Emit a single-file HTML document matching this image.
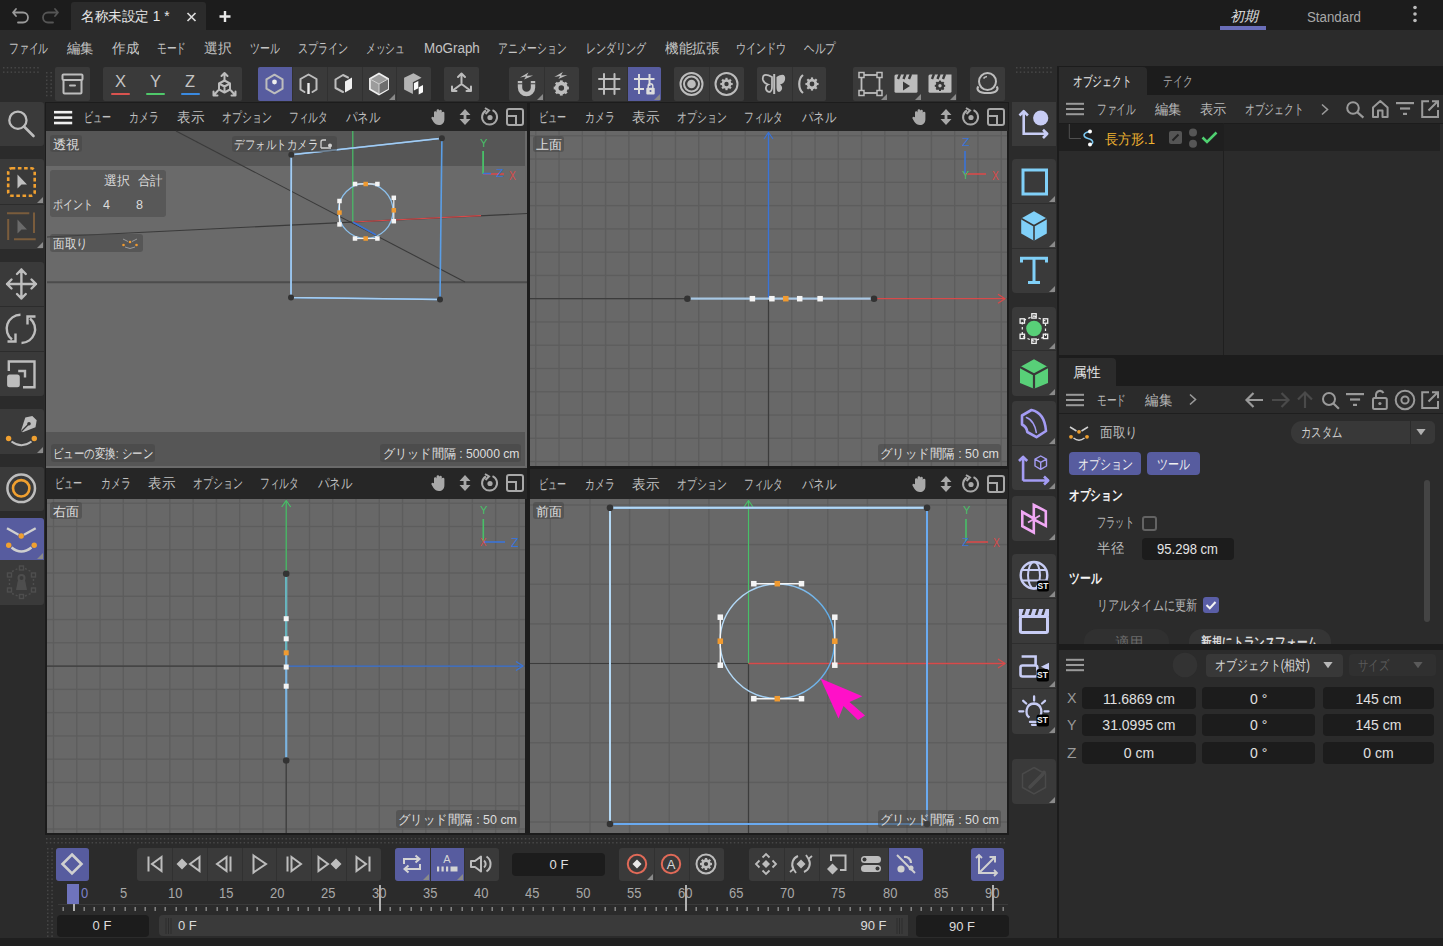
<!DOCTYPE html><html><head><meta charset="utf-8"><style>
*{box-sizing:border-box}
html,body{margin:0;padding:0}
body{width:1443px;height:946px;overflow:hidden;position:relative;background:#2b2b2b;font-family:"Liberation Sans",sans-serif;}
.t{position:absolute;white-space:nowrap;transform-origin:0 50%;}
.a{position:absolute}
svg.a{overflow:visible}
</style></head><body><div class="a" style="left:0px;top:0px;width:1443px;height:30px;background:#1c1c1c;"></div><div class="a" style="left:71px;top:2px;width:135px;height:28px;background:#2b2b2b;border-radius:3px 3px 0 0"></div><div class="a" style="left:0px;top:30px;width:1443px;height:36px;background:#2b2b2b;"></div><div class="a" style="left:45px;top:102px;width:964px;height:733px;background:#1c1c1c;"></div><div class="a" style="left:1057px;top:66px;width:2px;height:872px;background:#1c1c1c;"></div><div class="a" style="left:0px;top:938px;width:1443px;height:8px;background:#1f1f1f;"></div><div class="t" style="left:81.00px;top:7.00px;font-size:14px;line-height:18px;color:#e8e8e8;font-weight:400;font-family:'Liberation Sans',sans-serif;transform:scaleX(0.9724);">名称未設定 1 *</div><svg class="a" style="left:10px;top:4px;" width="22" height="20" viewBox="0 0 22 20"><path d="M5 6 L2 9.5 L5 13 M2.5 9.5 H12 A5 5 0 0 1 12 19.5 H7" fill="none" stroke="#9a9a9a" stroke-width="1.8" stroke-linecap="round" stroke-linejoin="round" transform="translate(1,-1)"/></svg><svg class="a" style="left:40px;top:4px;" width="22" height="20" viewBox="0 0 22 20"><path d="M15 6 L18 9.5 L15 13 M17.5 9.5 H8 A5 5 0 0 0 8 19.5 H13" fill="none" stroke="#555" stroke-width="1.8" stroke-linecap="round" stroke-linejoin="round" transform="translate(0,-1)"/></svg><svg class="a" style="left:186px;top:12px;" width="11" height="10" viewBox="0 0 11 10"><path d="M1.5 1 L9.5 9 M9.5 1 L1.5 9" stroke="#dcdcdc" stroke-width="1.7"/></svg><svg class="a" style="left:218px;top:10px;" width="14" height="13" viewBox="0 0 14 13"><path d="M7 1 V12 M1.5 6.5 H12.5" stroke="#e8e8e8" stroke-width="2.4"/></svg><div class="t" style="left:1230.00px;top:7.00px;font-size:14px;line-height:18px;color:#e0e0e0;font-weight:400;font-family:'Liberation Sans',sans-serif;font-style:italic;">初期</div><div class="a" style="left:1220px;top:26.2px;width:46px;height:3.8px;background:#6a6eb8;"></div><div class="t" style="left:1307.00px;top:7.50px;font-size:14px;line-height:18px;color:#a8a8a8;font-weight:400;font-family:'Liberation Sans',sans-serif;transform:scaleX(0.9502);">Standard</div><svg class="a" style="left:1411px;top:4px;" width="8" height="20" viewBox="0 0 8 20"><circle cx="4" cy="3.5" r="1.8" fill="#bbb"/><circle cx="4" cy="10" r="1.8" fill="#bbb"/><circle cx="4" cy="16.5" r="1.8" fill="#bbb"/></svg><div class="t" style="left:8.70px;top:38.70px;font-size:14px;line-height:18px;color:#c4c4c4;font-weight:400;font-family:'Liberation Sans',sans-serif;transform:scaleX(0.7018);">ファイル</div><div class="t" style="left:67.00px;top:38.70px;font-size:14px;line-height:18px;color:#c4c4c4;font-weight:400;font-family:'Liberation Sans',sans-serif;transform:scaleX(0.9536);">編集</div><div class="t" style="left:112.00px;top:38.70px;font-size:14px;line-height:18px;color:#c4c4c4;font-weight:400;font-family:'Liberation Sans',sans-serif;transform:scaleX(0.9643);">作成</div><div class="t" style="left:156.60px;top:38.70px;font-size:14px;line-height:18px;color:#c4c4c4;font-weight:400;font-family:'Liberation Sans',sans-serif;transform:scaleX(0.6929);">モード</div><div class="t" style="left:203.70px;top:38.70px;font-size:14px;line-height:18px;color:#c4c4c4;font-weight:400;font-family:'Liberation Sans',sans-serif;transform:scaleX(0.9893);">選択</div><div class="t" style="left:249.70px;top:38.70px;font-size:14px;line-height:18px;color:#c4c4c4;font-weight:400;font-family:'Liberation Sans',sans-serif;transform:scaleX(0.7071);">ツール</div><div class="t" style="left:297.50px;top:38.70px;font-size:14px;line-height:18px;color:#c4c4c4;font-weight:400;font-family:'Liberation Sans',sans-serif;transform:scaleX(0.7186);">スプライン</div><div class="t" style="left:366.00px;top:38.70px;font-size:14px;line-height:18px;color:#c4c4c4;font-weight:400;font-family:'Liberation Sans',sans-serif;transform:scaleX(0.6964);">メッシュ</div><div class="t" style="left:423.90px;top:38.70px;font-size:14px;line-height:18px;color:#c4c4c4;font-weight:400;font-family:'Liberation Sans',sans-serif;transform:scaleX(0.9561);">MoGraph</div><div class="t" style="left:498.00px;top:38.70px;font-size:14px;line-height:18px;color:#c4c4c4;font-weight:400;font-family:'Liberation Sans',sans-serif;transform:scaleX(0.6980);">アニメーション</div><div class="t" style="left:585.50px;top:38.70px;font-size:14px;line-height:18px;color:#c4c4c4;font-weight:400;font-family:'Liberation Sans',sans-serif;transform:scaleX(0.7202);">レンダリング</div><div class="t" style="left:664.60px;top:38.70px;font-size:14px;line-height:18px;color:#c4c4c4;font-weight:400;font-family:'Liberation Sans',sans-serif;transform:scaleX(0.9679);">機能拡張</div><div class="t" style="left:736.30px;top:38.70px;font-size:14px;line-height:18px;color:#c4c4c4;font-weight:400;font-family:'Liberation Sans',sans-serif;transform:scaleX(0.7157);">ウインドウ</div><div class="t" style="left:804.20px;top:38.70px;font-size:14px;line-height:18px;color:#c4c4c4;font-weight:400;font-family:'Liberation Sans',sans-serif;transform:scaleX(0.7571);">ヘルプ</div><svg class="a" style="left:0px;top:67px;" width="44" height="8" viewBox="0 0 44 8"><rect x="3.0" y="0" width="1.5" height="1.5" fill="#474747"/><rect x="3.0" y="4.4" width="1.5" height="1.5" fill="#474747"/><rect x="6.8" y="0" width="1.5" height="1.5" fill="#474747"/><rect x="6.8" y="4.4" width="1.5" height="1.5" fill="#474747"/><rect x="10.6" y="0" width="1.5" height="1.5" fill="#474747"/><rect x="10.6" y="4.4" width="1.5" height="1.5" fill="#474747"/><rect x="14.4" y="0" width="1.5" height="1.5" fill="#474747"/><rect x="14.4" y="4.4" width="1.5" height="1.5" fill="#474747"/><rect x="18.2" y="0" width="1.5" height="1.5" fill="#474747"/><rect x="18.2" y="4.4" width="1.5" height="1.5" fill="#474747"/><rect x="22.0" y="0" width="1.5" height="1.5" fill="#474747"/><rect x="22.0" y="4.4" width="1.5" height="1.5" fill="#474747"/><rect x="25.8" y="0" width="1.5" height="1.5" fill="#474747"/><rect x="25.8" y="4.4" width="1.5" height="1.5" fill="#474747"/><rect x="29.6" y="0" width="1.5" height="1.5" fill="#474747"/><rect x="29.6" y="4.4" width="1.5" height="1.5" fill="#474747"/><rect x="33.4" y="0" width="1.5" height="1.5" fill="#474747"/><rect x="33.4" y="4.4" width="1.5" height="1.5" fill="#474747"/><rect x="37.2" y="0" width="1.5" height="1.5" fill="#474747"/><rect x="37.2" y="4.4" width="1.5" height="1.5" fill="#474747"/></svg><svg class="a" style="left:46px;top:72px;" width="8" height="28" viewBox="0 0 8 28"><rect x="0" y="0.0" width="1.5" height="1.5" fill="#474747"/><rect x="4.4" y="0.0" width="1.5" height="1.5" fill="#474747"/><rect x="0" y="3.8" width="1.5" height="1.5" fill="#474747"/><rect x="4.4" y="3.8" width="1.5" height="1.5" fill="#474747"/><rect x="0" y="7.6" width="1.5" height="1.5" fill="#474747"/><rect x="4.4" y="7.6" width="1.5" height="1.5" fill="#474747"/><rect x="0" y="11.4" width="1.5" height="1.5" fill="#474747"/><rect x="4.4" y="11.4" width="1.5" height="1.5" fill="#474747"/><rect x="0" y="15.2" width="1.5" height="1.5" fill="#474747"/><rect x="4.4" y="15.2" width="1.5" height="1.5" fill="#474747"/><rect x="0" y="19.0" width="1.5" height="1.5" fill="#474747"/><rect x="4.4" y="19.0" width="1.5" height="1.5" fill="#474747"/><rect x="0" y="22.8" width="1.5" height="1.5" fill="#474747"/><rect x="4.4" y="22.8" width="1.5" height="1.5" fill="#474747"/></svg><svg class="a" style="left:1016px;top:67px;" width="40" height="8" viewBox="0 0 40 8"><rect x="0.0" y="0" width="1.5" height="1.5" fill="#474747"/><rect x="0.0" y="4.4" width="1.5" height="1.5" fill="#474747"/><rect x="3.8" y="0" width="1.5" height="1.5" fill="#474747"/><rect x="3.8" y="4.4" width="1.5" height="1.5" fill="#474747"/><rect x="7.6" y="0" width="1.5" height="1.5" fill="#474747"/><rect x="7.6" y="4.4" width="1.5" height="1.5" fill="#474747"/><rect x="11.4" y="0" width="1.5" height="1.5" fill="#474747"/><rect x="11.4" y="4.4" width="1.5" height="1.5" fill="#474747"/><rect x="15.2" y="0" width="1.5" height="1.5" fill="#474747"/><rect x="15.2" y="4.4" width="1.5" height="1.5" fill="#474747"/><rect x="19.0" y="0" width="1.5" height="1.5" fill="#474747"/><rect x="19.0" y="4.4" width="1.5" height="1.5" fill="#474747"/><rect x="22.8" y="0" width="1.5" height="1.5" fill="#474747"/><rect x="22.8" y="4.4" width="1.5" height="1.5" fill="#474747"/><rect x="26.6" y="0" width="1.5" height="1.5" fill="#474747"/><rect x="26.6" y="4.4" width="1.5" height="1.5" fill="#474747"/><rect x="30.4" y="0" width="1.5" height="1.5" fill="#474747"/><rect x="30.4" y="4.4" width="1.5" height="1.5" fill="#474747"/><rect x="34.2" y="0" width="1.5" height="1.5" fill="#474747"/><rect x="34.2" y="4.4" width="1.5" height="1.5" fill="#474747"/></svg><div class="a" style="left:55px;top:67px;width:35px;height:34px;background:#3a3a3a;border-radius:2px"></div><div class="a" style="left:103px;top:67px;width:139px;height:34px;background:#3a3a3a;border-radius:2px"></div><div class="a" style="left:257.5px;top:67px;width:173.5px;height:34px;background:#3a3a3a;border-radius:2px"></div><div class="a" style="left:257.5px;top:67px;width:34.7px;height:34px;background:#575c9f;border-top-left-radius:2px;border-bottom-left-radius:2px;"></div><div class="a" style="left:292.2px;top:67px;width:1px;height:34px;background:#313131;"></div><div class="a" style="left:326.9px;top:67px;width:1px;height:34px;background:#313131;"></div><div class="a" style="left:361.6px;top:67px;width:1px;height:34px;background:#313131;"></div><svg class="a" style="left:389.3px;top:94px;" width="6" height="6" viewBox="0 0 6 6"><path d="M6 0 V6 H0 Z" fill="#8a8a8a"/></svg><div class="a" style="left:396.3px;top:67px;width:1px;height:34px;background:#313131;"></div><div class="a" style="left:444px;top:67px;width:35px;height:34px;background:#3a3a3a;border-radius:2px"></div><div class="a" style="left:509px;top:67px;width:70px;height:34px;background:#3a3a3a;border-radius:2px"></div><svg class="a" style="left:537.0px;top:94px;" width="6" height="6" viewBox="0 0 6 6"><path d="M6 0 V6 H0 Z" fill="#8a8a8a"/></svg><div class="a" style="left:544.0px;top:67px;width:1px;height:34px;background:#313131;"></div><div class="a" style="left:592px;top:67px;width:69px;height:34px;background:#3a3a3a;border-radius:2px"></div><div class="a" style="left:626.5px;top:67px;width:34.5px;height:34px;background:#575c9f;border-top-right-radius:2px;border-bottom-right-radius:2px;"></div><div class="a" style="left:626.5px;top:67px;width:1px;height:34px;background:#313131;"></div><svg class="a" style="left:654.0px;top:94px;" width="6" height="6" viewBox="0 0 6 6"><path d="M6 0 V6 H0 Z" fill="#8a8a8a"/></svg><div class="a" style="left:674px;top:67px;width:70px;height:34px;background:#3a3a3a;border-radius:2px"></div><div class="a" style="left:709.0px;top:67px;width:1px;height:34px;background:#313131;"></div><div class="a" style="left:757px;top:67px;width:69px;height:34px;background:#3a3a3a;border-radius:2px"></div><div class="a" style="left:791.5px;top:67px;width:1px;height:34px;background:#313131;"></div><div class="a" style="left:853px;top:67px;width:104px;height:34px;background:#3a3a3a;border-radius:2px"></div><svg class="a" style="left:880.67px;top:94px;" width="6" height="6" viewBox="0 0 6 6"><path d="M6 0 V6 H0 Z" fill="#8a8a8a"/></svg><svg class="a" style="left:915.33px;top:94px;" width="6" height="6" viewBox="0 0 6 6"><path d="M6 0 V6 H0 Z" fill="#8a8a8a"/></svg><svg class="a" style="left:950.0px;top:94px;" width="6" height="6" viewBox="0 0 6 6"><path d="M6 0 V6 H0 Z" fill="#8a8a8a"/></svg><div class="a" style="left:970px;top:67px;width:35px;height:34px;background:#3a3a3a;border-radius:2px"></div><svg class="a" style="left:55px;top:68px;" width="35" height="34" viewBox="0 0 35 34"><rect x="7.5" y="6.5" width="20" height="5.5" rx="1" fill="none" stroke="#bdbdbd" stroke-width="2" stroke-linejoin="round" stroke-linecap="round"/><rect x="8.5" y="12" width="18" height="13.5" rx="1" fill="none" stroke="#bdbdbd" stroke-width="2" stroke-linejoin="round" stroke-linecap="round"/><path d="M15 17.5 H20" fill="none" stroke="#bdbdbd" stroke-width="2" stroke-linejoin="round" stroke-linecap="round"/></svg><div class="t" style="left:115.00px;top:72.00px;font-size:16px;line-height:20px;color:#c4c4c4;font-weight:400;font-family:'Liberation Sans',sans-serif;transform:scaleX(1.0307);">X</div><div class="a" style="left:111px;top:92.5px;width:19px;height:2px;background:#d9534f;border-radius:1px"></div><div class="t" style="left:150.00px;top:72.00px;font-size:16px;line-height:20px;color:#c4c4c4;font-weight:400;font-family:'Liberation Sans',sans-serif;transform:scaleX(1.0307);">Y</div><div class="a" style="left:146px;top:92.5px;width:19px;height:2px;background:#4fc86a;border-radius:1px"></div><div class="t" style="left:184.50px;top:72.00px;font-size:16px;line-height:20px;color:#c4c4c4;font-weight:400;font-family:'Liberation Sans',sans-serif;transform:scaleX(1.0224);">Z</div><div class="a" style="left:181px;top:92.5px;width:19px;height:2px;background:#3a8ae0;border-radius:1px"></div><svg class="a" style="left:207px;top:68.5px;" width="35" height="34" viewBox="0 0 35 34"><path d="M17.5 4 V12 M14.5 7 L17.5 4 L20.5 7" fill="none" stroke="#bdbdbd" stroke-width="2" stroke-linejoin="round" stroke-linecap="round" stroke-width="1.6"/><path d="M12 14.5 L17.5 11.5 L23 14.5 L23 20.5 L17.5 23.5 L12 20.5 Z M12 14.5 L17.5 17.5 L23 14.5 M17.5 17.5 V23.5" fill="none" stroke="#bdbdbd" stroke-width="2" stroke-linejoin="round" stroke-linecap="round" stroke-width="1.6"/><path d="M11 21.5 L6.5 26.5 M6.5 22.5 V26.5 H10.5 M24 21.5 L28.5 26.5 M28.5 22.5 V26.5 H24.5" fill="none" stroke="#bdbdbd" stroke-width="2" stroke-linejoin="round" stroke-linecap="round" stroke-width="1.6"/></svg><svg class="a" style="left:257.5px;top:67px;" width="35" height="34" viewBox="0 0 35 34"><path d="M16.50 7.70 L24.55 12.35 L24.55 21.65 L16.50 26.30 L8.45 21.65 L8.45 12.35 Z" fill="none" stroke="#bdbdbd" stroke-width="2" stroke-linejoin="round" stroke-linecap="round" stroke-width="1.7"/><circle cx="16.5" cy="15" r="2.4" fill="#eee"/></svg><svg class="a" style="left:292.2px;top:67px;" width="35" height="34" viewBox="0 0 35 34"><path d="M12.5 25 L8.5 22.5 V12 L16.5 7.5 L24.5 12 V22.5 L20.5 25" fill="none" stroke="#bdbdbd" stroke-width="2" stroke-linejoin="round" stroke-linecap="round" stroke-width="1.7"/><path d="M16.5 16 V27" stroke="#eee" stroke-width="2.4"/></svg><svg class="a" style="left:326.9px;top:67px;" width="35" height="34" viewBox="0 0 35 34"><path d="M16 25 L8.5 21 V12.5 L16 8 L21 10.5" fill="none" stroke="#bdbdbd" stroke-width="2" stroke-linejoin="round" stroke-linecap="round" stroke-width="1.7"/><path d="M18 14.5 L25 10.5 V21.5 L18 25.5 Z" fill="#f0f0f0"/></svg><svg class="a" style="left:361.6px;top:67px;" width="35" height="34" viewBox="0 0 35 34"><path d="M17.00 6.50 L26.09 11.75 L26.09 22.25 L17.00 27.50 L7.91 22.25 L7.91 11.75 Z" fill="#9c9c9c" stroke="#f0f0f0" stroke-width="1.7"/><path d="M17 17 L26 12 V22 L17 27 Z" fill="#6e6e6e"/><path d="M8 12 L17 17 L26 12 M17 17 V27" fill="none" stroke="#d0d0d0" stroke-width="1"/></svg><svg class="a" style="left:396.3px;top:67px;" width="35" height="34" viewBox="0 0 35 34"><path d="M8.1 10.8 L17.5 6.2 L25.6 10.8 L16.9 15.3 V27 L8.1 22.4 Z" fill="#b4b4b4"/><path d="M17.9 16.2 L22.3 14 V21.3 L17.9 23.5 Z" fill="#fafafa"/><path d="M22.7 20.2 L27 18 V25.3 L22.7 27.5 Z" fill="#fafafa"/></svg><svg class="a" style="left:444px;top:67px;" width="35" height="34" viewBox="0 0 35 34"><path d="M17.5 17 V6.5 M14 10 L17.5 6.5 L21 10 M17.5 17 L8 24 M8 19.5 V24 H12.5 M17.5 17 L27 24 M27 19.5 V24 H22.5" fill="none" stroke="#bdbdbd" stroke-width="2" stroke-linejoin="round" stroke-linecap="round" stroke-width="2"/></svg><svg class="a" style="left:509px;top:67px;" width="35" height="34" viewBox="0 0 35 34"><path d="M11 14 V20.5 A6.5 6.5 0 0 0 24 20.5 V14" fill="none" stroke="#bdbdbd" stroke-width="4.4"/><path d="M8.5 16.8 H13.5 M21.5 16.8 H26.5" stroke="#383838" stroke-width="1.1"/><path d="M11.0 10.4 L19.5 5.5 L17.7 8.8 L24.1 8.4 L15.1 12.4 L16.9 9.4 Z" fill="#bdbdbd"/></svg><svg class="a" style="left:544px;top:67px;" width="35" height="34" viewBox="0 0 35 34"><circle cx="17.3" cy="21" r="4.6" fill="none" stroke="#bdbdbd" stroke-width="3.6"/><path d="M22.30 21.00 L24.90 21.00" stroke="#bdbdbd" stroke-width="2.8"/><path d="M20.84 24.54 L22.67 26.37" stroke="#bdbdbd" stroke-width="2.8"/><path d="M17.30 26.00 L17.30 28.60" stroke="#bdbdbd" stroke-width="2.8"/><path d="M13.76 24.54 L11.93 26.37" stroke="#bdbdbd" stroke-width="2.8"/><path d="M12.30 21.00 L9.70 21.00" stroke="#bdbdbd" stroke-width="2.8"/><path d="M13.76 17.46 L11.93 15.63" stroke="#bdbdbd" stroke-width="2.8"/><path d="M17.30 16.00 L17.30 13.40" stroke="#bdbdbd" stroke-width="2.8"/><path d="M20.84 17.46 L22.67 15.63" stroke="#bdbdbd" stroke-width="2.8"/><path d="M10.3 10.0 L18.8 5.1 L17.0 8.4 L23.4 8.0 L14.4 12.0 L16.200000000000003 9.0 Z" fill="#bdbdbd"/></svg><svg class="a" style="left:592px;top:67px;" width="34.5" height="34" viewBox="0 0 34.5 34"><path d="M12 7 V27 M22.5 7 V27 M7 12 H27.5 M7 22 H27.5" fill="none" stroke="#bdbdbd" stroke-width="2" stroke-linejoin="round" stroke-linecap="round" stroke-width="2"/></svg><svg class="a" style="left:626.5px;top:67px;" width="34.5" height="34" viewBox="0 0 34.5 34"><path d="M12 7 V27 M22.5 7 V19 M7 12 H27.5 M7 22 H17" fill="none" stroke="#ddd" stroke-width="2"/><rect x="19.3" y="20.8" width="8.4" height="6.7" rx="1" fill="#ddd"/><path d="M21.2 21 V19 A2.3 2.3 0 0 1 25.8 19 V21" fill="none" stroke="#ddd" stroke-width="1.5"/><circle cx="23.5" cy="24" r="1" fill="#575c9f"/></svg><svg class="a" style="left:674px;top:67px;" width="35" height="34" viewBox="0 0 35 34"><circle cx="17.5" cy="17" r="11" fill="none" stroke="#bdbdbd" stroke-width="2" stroke-linejoin="round" stroke-linecap="round" stroke-width="1.8"/><circle cx="17.5" cy="17" r="7.5" fill="none" stroke="#bdbdbd" stroke-width="2" stroke-linejoin="round" stroke-linecap="round" stroke-width="1.8"/><circle cx="17.5" cy="17" r="4.3" fill="#bdbdbd"/></svg><svg class="a" style="left:709px;top:67px;" width="35" height="34" viewBox="0 0 35 34"><circle cx="17.5" cy="17" r="11" fill="none" stroke="#bdbdbd" stroke-width="2" stroke-linejoin="round" stroke-linecap="round" stroke-width="1.8"/><circle cx="17.5" cy="17" r="3.5" fill="none" stroke="#bdbdbd" stroke-width="2.6"/><path d="M21.00 17.00 L23.70 17.00" stroke="#bdbdbd" stroke-width="2.2"/><path d="M19.97 19.47 L21.88 21.38" stroke="#bdbdbd" stroke-width="2.2"/><path d="M17.50 20.50 L17.50 23.20" stroke="#bdbdbd" stroke-width="2.2"/><path d="M15.03 19.47 L13.12 21.38" stroke="#bdbdbd" stroke-width="2.2"/><path d="M14.00 17.00 L11.30 17.00" stroke="#bdbdbd" stroke-width="2.2"/><path d="M15.03 14.53 L13.12 12.62" stroke="#bdbdbd" stroke-width="2.2"/><path d="M17.50 13.50 L17.50 10.80" stroke="#bdbdbd" stroke-width="2.2"/><path d="M19.97 14.53 L21.88 12.62" stroke="#bdbdbd" stroke-width="2.2"/></svg><svg class="a" style="left:757px;top:67px;" width="34.5" height="34" viewBox="0 0 34.5 34"><path d="M17.2 7 V27" stroke="#bdbdbd" stroke-width="2"/><path d="M15 10 C8 6 5 8 6 13 C7 16 9 17 11 17.5 C8 19 8 24 12 25 C14 25 15 22 15 20 Z" fill="none" stroke="#bdbdbd" stroke-width="1.8"/><path d="M19.5 10 C26 6 29 8 28 13 C27 16 25 17 23 17.5 C26 19 26 24 22 25 C20 25 19.5 22 19.5 20 Z" fill="#bdbdbd"/></svg><svg class="a" style="left:791.5px;top:67px;" width="34.5" height="34" viewBox="0 0 34.5 34"><path d="M11 8 C6 12 6 22 11 26" fill="none" stroke="#bdbdbd" stroke-width="2.2"/><circle cx="20" cy="17" r="3.8" fill="none" stroke="#bdbdbd" stroke-width="2.8"/><path d="M23.80 17.00 L26.60 17.00" stroke="#bdbdbd" stroke-width="2.2"/><path d="M22.69 19.69 L24.67 21.67" stroke="#bdbdbd" stroke-width="2.2"/><path d="M20.00 20.80 L20.00 23.60" stroke="#bdbdbd" stroke-width="2.2"/><path d="M17.31 19.69 L15.33 21.67" stroke="#bdbdbd" stroke-width="2.2"/><path d="M16.20 17.00 L13.40 17.00" stroke="#bdbdbd" stroke-width="2.2"/><path d="M17.31 14.31 L15.33 12.33" stroke="#bdbdbd" stroke-width="2.2"/><path d="M20.00 13.20 L20.00 10.40" stroke="#bdbdbd" stroke-width="2.2"/><path d="M22.69 14.31 L24.67 12.33" stroke="#bdbdbd" stroke-width="2.2"/></svg><svg class="a" style="left:853px;top:67px;" width="34.7" height="34" viewBox="0 0 34.7 34"><rect x="8.5" y="8" width="18" height="18" fill="none" stroke="#bdbdbd" stroke-width="1.8"/><rect x="6.0" y="5.5" width="5" height="5" fill="#363636" stroke="#bdbdbd" stroke-width="1.5"/><rect x="24.0" y="5.5" width="5" height="5" fill="#363636" stroke="#bdbdbd" stroke-width="1.5"/><rect x="6.0" y="23.5" width="5" height="5" fill="#363636" stroke="#bdbdbd" stroke-width="1.5"/><rect x="24.0" y="23.5" width="5" height="5" fill="#363636" stroke="#bdbdbd" stroke-width="1.5"/></svg><svg class="a" style="left:887.7px;top:67px;" width="34.7" height="34" viewBox="0 0 34.7 34"><path d="M6.5 9 Q6.5 7.4 8 7.4 H29.5 V24.2 Q29.5 25.7 28 25.7 H8 Q6.5 25.7 6.5 24.2 Z" fill="#bdbdbd"/><path d="M12 7 L10 12 M17.5 7 L15.5 12 M23 7 L21 12" stroke="#383838" stroke-width="2.4"/><path d="M15 14.5 L22 19 L15 23.5 Z" fill="#383838"/></svg><svg class="a" style="left:922.4px;top:67px;" width="34.7" height="34" viewBox="0 0 34.7 34"><path d="M6.5 9 Q6.5 7.4 8 7.4 H29.5 V24.2 Q29.5 25.7 28 25.7 H8 Q6.5 25.7 6.5 24.2 Z" fill="#bdbdbd"/><path d="M12 7 L10 12 M17.5 7 L15.5 12 M23 7 L21 12" stroke="#383838" stroke-width="2.4"/><circle cx="18" cy="18.8" r="3" fill="none" stroke="#383838" stroke-width="2.6"/><path d="M21.00 18.80 L23.20 18.80" stroke="#383838" stroke-width="2"/><path d="M20.12 20.92 L21.68 22.48" stroke="#383838" stroke-width="2"/><path d="M18.00 21.80 L18.00 24.00" stroke="#383838" stroke-width="2"/><path d="M15.88 20.92 L14.32 22.48" stroke="#383838" stroke-width="2"/><path d="M15.00 18.80 L12.80 18.80" stroke="#383838" stroke-width="2"/><path d="M15.88 16.68 L14.32 15.12" stroke="#383838" stroke-width="2"/><path d="M18.00 15.80 L18.00 13.60" stroke="#383838" stroke-width="2"/><path d="M20.12 16.68 L21.68 15.12" stroke="#383838" stroke-width="2"/></svg><svg class="a" style="left:970px;top:67px;" width="35" height="34" viewBox="0 0 35 34"><circle cx="17.5" cy="14.5" r="8.5" fill="none" stroke="#bdbdbd" stroke-width="2"/><path d="M13.5 11.5 A4.5 4.5 0 0 1 17 9.5" fill="none" stroke="#bdbdbd" stroke-width="1.5"/><path d="M8.5 19.5 C6 22 8 26 17.5 26 C27 26 29 22 26.5 19.5" fill="none" stroke="#bdbdbd" stroke-width="2.2"/></svg><div class="a" style="left:0px;top:102px;width:44px;height:44px;background:#3a3a3a;border-top-right-radius:3px;border-bottom-right-radius:3px;"></div><div class="a" style="left:0px;top:159px;width:44px;height:45px;background:#3a3a3a;border-top-right-radius:3px;border-bottom-right-radius:0px;"></div><svg class="a" style="left:37px;top:197px;" width="6" height="6" viewBox="0 0 6 6"><path d="M6 0 V6 H0 Z" fill="#8a8a8a"/></svg><div class="a" style="left:0px;top:204px;width:44px;height:45px;background:#3a3a3a;border-top-right-radius:0px;border-bottom-right-radius:3px;"></div><div class="a" style="left:0px;top:204px;width:44px;height:1px;background:#2c2c2c;"></div><svg class="a" style="left:37px;top:242px;" width="6" height="6" viewBox="0 0 6 6"><path d="M6 0 V6 H0 Z" fill="#8a8a8a"/></svg><div class="a" style="left:0px;top:262px;width:44px;height:44px;background:#3a3a3a;border-top-right-radius:3px;border-bottom-right-radius:0px;"></div><div class="a" style="left:0px;top:306px;width:44px;height:45px;background:#3a3a3a;border-top-right-radius:0px;border-bottom-right-radius:0px;"></div><div class="a" style="left:0px;top:306px;width:44px;height:1px;background:#2c2c2c;"></div><div class="a" style="left:0px;top:351px;width:44px;height:45px;background:#3a3a3a;border-top-right-radius:0px;border-bottom-right-radius:3px;"></div><div class="a" style="left:0px;top:351px;width:44px;height:1px;background:#2c2c2c;"></div><div class="a" style="left:0px;top:409px;width:44px;height:45px;background:#3a3a3a;border-top-right-radius:3px;border-bottom-right-radius:3px;"></div><svg class="a" style="left:37px;top:447px;" width="6" height="6" viewBox="0 0 6 6"><path d="M6 0 V6 H0 Z" fill="#8a8a8a"/></svg><div class="a" style="left:0px;top:467px;width:44px;height:44px;background:#3a3a3a;border-top-right-radius:3px;border-bottom-right-radius:3px;"></div><div class="a" style="left:0px;top:518px;width:44px;height:42px;background:#575c9f;border-top-right-radius:3px;border-bottom-right-radius:0px;"></div><svg class="a" style="left:37px;top:553px;" width="6" height="6" viewBox="0 0 6 6"><path d="M6 0 V6 H0 Z" fill="#8a8a8a"/></svg><div class="a" style="left:0px;top:560px;width:44px;height:45px;background:#3a3a3a;border-top-right-radius:0px;border-bottom-right-radius:3px;"></div><svg class="a" style="left:0px;top:102px;" width="44" height="44" viewBox="0 0 44 44"><circle cx="17.9" cy="18.2" r="8.6" fill="none" stroke="#bdbdbd" stroke-width="2.3"/><path d="M24 24.5 L33.5 34" stroke="#bdbdbd" stroke-width="2.6" stroke-linecap="round"/></svg><svg class="a" style="left:0px;top:159px;" width="44" height="45" viewBox="0 0 44 45"><rect x="8.2" y="9.2" width="26.5" height="27.5" rx="3.5" fill="none" stroke="#f0a030" stroke-width="2.6" stroke-dasharray="3.6 2.6"/><path d="M17.5 15.5 L27 25.5 L21.5 25.5 L17.5 29.5 Z" fill="#c0c0c0"/></svg><svg class="a" style="left:0px;top:204px;" width="44" height="45" viewBox="0 0 44 45"><path d="M7 9.3 H29.3 M34 8.5 V29 M8.2 15 V36 M14 35.3 H35.7" stroke="#7a5c3c" stroke-width="2"/><path d="M17.5 15.5 L27 25.5 L21.5 25.5 L17.5 29.5 Z" fill="#6a6a6a"/></svg><svg class="a" style="left:0px;top:262px;" width="44" height="44" viewBox="0 0 44 44"><path d="M21.4 7.5 V36.5 M7 22 H36 M17 12 L21.4 7.5 L25.8 12 M17 32 L21.4 36.5 L25.8 32 M11.5 17.5 L7 22 L11.5 26.5 M31.5 17.5 L36 22 L31.5 26.5" fill="none" stroke="#bdbdbd" stroke-width="2.4" stroke-linecap="round" stroke-linejoin="round"/></svg><svg class="a" style="left:0px;top:306px;" width="44" height="45" viewBox="0 0 44 45"><path d="M20.5 8.8 A13.8 13.8 0 0 0 12 33.5" fill="none" stroke="#bdbdbd" stroke-width="2.4"/><path d="M7.5 35.5 H15.5 V27.5" fill="none" stroke="#bdbdbd" stroke-width="2.4"/><path d="M21.5 37 A13.8 13.8 0 0 0 30 12.5" fill="none" stroke="#bdbdbd" stroke-width="2.4"/><path d="M35.5 10.5 H27.5 V18.5" fill="none" stroke="#bdbdbd" stroke-width="2.4"/></svg><svg class="a" style="left:0px;top:351px;" width="44" height="45" viewBox="0 0 44 45"><path d="M8.8 20 V10.5 H34.5 V36.3 H23" fill="none" stroke="#bdbdbd" stroke-width="2.4"/><path d="M18.2 20 H25 V26.5" fill="none" stroke="#bdbdbd" stroke-width="2.4"/><rect x="7.1" y="23.6" width="12.7" height="12.7" rx="2.5" fill="#bdbdbd"/></svg><svg class="a" style="left:0px;top:409px;" width="44" height="45" viewBox="0 0 44 45"><path d="M21 21.7 L25.3 8.5 L32.3 7.1 L36.7 11.3 L35.5 18.3 L22.7 23.2 Z" fill="#bdbdbd"/><path d="M21.6 22.3 L29 14.7" stroke="#383838" stroke-width="1.3"/><circle cx="29" cy="14.7" r="1.8" fill="#383838"/><path d="M11.5 32.5 Q21.4 39.8 31.5 32.5" fill="none" stroke="#bdbdbd" stroke-width="2"/><circle cx="8.6" cy="29.5" r="2.7" fill="#f0a030"/><circle cx="34.3" cy="29.5" r="2.7" fill="#f0a030"/></svg><svg class="a" style="left:0px;top:467px;" width="44" height="44" viewBox="0 0 44 44"><circle cx="21.2" cy="21.3" r="13.8" fill="none" stroke="#bdbdbd" stroke-width="2.5"/><circle cx="21.2" cy="21.3" r="8.2" fill="none" stroke="#f0a030" stroke-width="2.6"/></svg><svg class="a" style="left:0px;top:518px;" width="44" height="42" viewBox="0 0 44 42"><path d="M7 10.3 L18.5 16.8 M24 16.8 L35.7 10.3" stroke="#cfcfcf" stroke-width="2.4"/><circle cx="21.2" cy="18" r="2.7" fill="#f0a030"/><path d="M11.5 29.5 Q21.2 37.5 31.5 29.5" fill="none" stroke="#cfcfcf" stroke-width="2.4"/><circle cx="8.7" cy="27.2" r="2.7" fill="#f0a030"/><circle cx="34.2" cy="27.2" r="2.7" fill="#f0a030"/></svg><svg class="a" style="left:0px;top:560px;" width="44" height="45" viewBox="0 0 44 45"><g stroke="#4e4e4e" stroke-width="1.4" fill="none"><rect x="7.5" y="13" width="4" height="4"/><rect x="31.5" y="13" width="4" height="4"/><rect x="7.5" y="28" width="4" height="4"/><rect x="31.5" y="28" width="4" height="4"/><rect x="19.5" y="6" width="4" height="4"/><rect x="19.5" y="34.5" width="4" height="4"/><path d="M9.5 19 V26 M33.5 19 V26 M12 11.5 L18 8.5 M25 8.5 L31 11.5 M12 33.5 L18 36 M25 36 L31 33.5" stroke-dasharray="2 2"/></g><path d="M16 30 L18 20 H25 L27 30 Z" fill="#4e4e4e"/><circle cx="21.5" cy="18" r="3" fill="none" stroke="#4e4e4e" stroke-width="2"/></svg><div class="a" style="left:46px;top:103px;width:481px;height:28px;background:#262626;"></div><svg class="a" style="left:53.8px;top:109.7px;" width="19" height="14" viewBox="0 0 19 14"><rect x="0" y="0.9" width="18.2" height="2.6" fill="#f0f0f0"/><rect x="0" y="6.3" width="18.2" height="2.6" fill="#f0f0f0"/><rect x="0" y="11.7" width="18.2" height="2.6" fill="#f0f0f0"/></svg><div class="t" style="left:83.70px;top:107.70px;font-size:14px;line-height:18px;color:#c0c0c0;font-weight:400;font-family:'Liberation Sans',sans-serif;transform:scaleX(0.6452);">ビュー</div><div class="t" style="left:129.00px;top:107.70px;font-size:14px;line-height:18px;color:#c0c0c0;font-weight:400;font-family:'Liberation Sans',sans-serif;transform:scaleX(0.7048);">カメラ</div><div class="t" style="left:176.80px;top:107.70px;font-size:14px;line-height:18px;color:#c0c0c0;font-weight:400;font-family:'Liberation Sans',sans-serif;transform:scaleX(0.9679);">表示</div><div class="t" style="left:221.50px;top:107.70px;font-size:14px;line-height:18px;color:#c0c0c0;font-weight:400;font-family:'Liberation Sans',sans-serif;transform:scaleX(0.7071);">オプション</div><div class="t" style="left:288.70px;top:107.70px;font-size:14px;line-height:18px;color:#c0c0c0;font-weight:400;font-family:'Liberation Sans',sans-serif;transform:scaleX(0.6946);">フィルタ</div><div class="t" style="left:346.40px;top:107.70px;font-size:14px;line-height:18px;color:#c0c0c0;font-weight:400;font-family:'Liberation Sans',sans-serif;transform:scaleX(0.8143);">パネル</div><svg class="a" style="left:429px;top:106.7px;" width="20" height="20" viewBox="0 0 20 20"><path d="M5 10 V5.5 A1.3 1.3 0 0 1 7.6 5.5 V9 V3.5 A1.3 1.3 0 0 1 10.2 3.5 V9 V4 A1.3 1.3 0 0 1 12.8 4 V9 V6 A1.3 1.3 0 0 1 15.4 6 V12 C15.4 16 13 18 10 18 C7.5 18 6 17 4.5 15 L2.5 11.5 A1.2 1.2 0 0 1 4.5 10.2 Z" fill="#a8a8a8"/></svg><svg class="a" style="left:455px;top:106.7px;" width="20" height="20" viewBox="0 0 20 20"><path d="M10 2 L15.5 8 H4.5 Z M10 18 L15.5 12 H4.5 Z" fill="#a8a8a8"/><rect x="8.6" y="7" width="2.8" height="6" fill="#a8a8a8"/></svg><svg class="a" style="left:480px;top:106.7px;" width="20" height="20" viewBox="0 0 20 20"><path d="M12.5 3.2 A7.5 7.5 0 1 1 6 3.5" fill="none" stroke="#a8a8a8" stroke-width="2"/><path d="M5 1 L9 3.5 L5.5 7" fill="none" stroke="#a8a8a8" stroke-width="2"/><circle cx="10" cy="10.5" r="2.6" fill="#a8a8a8"/></svg><svg class="a" style="left:505px;top:106.7px;" width="20" height="20" viewBox="0 0 20 20"><rect x="2" y="2" width="16" height="16" rx="2" fill="none" stroke="#a8a8a8" stroke-width="2"/><path d="M2 9 H11 V18" fill="none" stroke="#a8a8a8" stroke-width="2"/></svg><svg class="a" style="left:46px;top:131px;" width="481" height="337" viewBox="0 0 481 337"><rect x="0" y="0" width="481" height="337" fill="#6a6a6a"/><rect x="0" y="0" width="479" height="35" fill="#000" opacity="0.19"/><rect x="0" y="301" width="479" height="34" fill="#000" opacity="0.19"/><path d="M1.00 151.20 L481.00 151.20" stroke="#4c4c4c" stroke-width="2"/><path d="M130.00 0.00 L419.00 151.00" stroke="#3a3a3a" stroke-width="1.1"/><path d="M1.00 106.00 L481.00 82.50" stroke="#3a3a3a" stroke-width="1.1"/><path d="M306.80 0.00 L306.80 91.00" stroke="#48c068" stroke-width="1.2"/><path d="M306.80 91.00 L435.00 84.70" stroke="#d84a4a" stroke-width="1.2"/><path d="M306.80 91.00 L330.00 104.00" stroke="#3a74d8" stroke-width="1.6"/><path d="M245.30 23.80 L395.90 7.30 L394.00 168.50 L245.00 166.50 Z" fill="none" stroke="#5a9ee6" stroke-width="1.6"/><path d="M245.30 23.80 L395.90 7.30" fill="none" stroke="#a6cdf0" stroke-width="1.6"/><path d="M245.30 23.80 L245.00 166.50 L394.00 168.50" fill="none" stroke="#a6cdf0" stroke-width="1.6"/><circle cx="245.30" cy="23.80" r="3" fill="#333"/><circle cx="395.90" cy="7.30" r="3" fill="#333"/><circle cx="394.00" cy="168.50" r="3" fill="#333"/><circle cx="245.00" cy="166.50" r="3" fill="#333"/><ellipse cx="319.7" cy="79.9" rx="27.3" ry="27.5" fill="none" stroke="#8cc0ec" stroke-width="1.3"/><path d="M309.00 53.00 L331.40 53.00" stroke="#f0f0f0" stroke-width="1.2"/><rect x="306.75" y="50.75" width="4.5" height="4.5" fill="#f4f4f4"/><rect x="329.15" y="50.75" width="4.5" height="4.5" fill="#f4f4f4"/><path d="M309.00 107.50 L331.40 107.50" stroke="#f0f0f0" stroke-width="1.2"/><rect x="306.75" y="105.25" width="4.5" height="4.5" fill="#f4f4f4"/><rect x="329.15" y="105.25" width="4.5" height="4.5" fill="#f4f4f4"/><path d="M293.50 70.00 L293.50 93.40" stroke="#f0f0f0" stroke-width="1.2"/><rect x="291.25" y="67.75" width="4.5" height="4.5" fill="#f4f4f4"/><rect x="291.25" y="91.15" width="4.5" height="4.5" fill="#f4f4f4"/><path d="M347.80 66.80 L347.80 90.20" stroke="#f0f0f0" stroke-width="1.2"/><rect x="345.55" y="64.55" width="4.5" height="4.5" fill="#f4f4f4"/><rect x="345.55" y="87.95" width="4.5" height="4.5" fill="#f4f4f4"/><rect x="317.45" y="50.75" width="4.5" height="4.5" fill="#f09a30"/><rect x="317.45" y="105.25" width="4.5" height="4.5" fill="#f09a30"/><rect x="291.25" y="79.35" width="4.5" height="4.5" fill="#f09a30"/><rect x="345.55" y="77.05" width="4.5" height="4.5" fill="#f09a30"/><path d="M437.10 20.00 V43" stroke="#48c068" stroke-width="1.8"/><path d="M437.00 43.00 H458" stroke="#d84a4a" stroke-width="1.6"/><path d="M437.00 42.60 H445" stroke="#3a74d8" stroke-width="1.6"/></svg><div class="t" style="left:479.80px;top:135.50px;font-size:11px;line-height:15px;color:#48c068;font-weight:400;font-family:'Liberation Sans',sans-serif;transform:scaleX(1.0077);">Y</div><div class="t" style="left:496.30px;top:165.50px;font-size:11px;line-height:15px;color:#3a74d8;font-weight:400;font-family:'Liberation Sans',sans-serif;transform:scaleX(1.1285);">Z</div><div class="t" style="left:509.20px;top:168.20px;font-size:12px;line-height:16px;color:#d84a4a;font-weight:400;font-family:'Liberation Sans',sans-serif;transform:scaleX(0.8483);">X</div><div class="a" style="left:50px;top:135.3px;width:31.5px;height:17.19999999999999px;background:rgba(70,70,70,0.55);border-radius:3px"></div><div class="t" style="left:52.50px;top:135.70px;font-size:13px;line-height:17px;color:#dedede;font-weight:400;font-family:'Liberation Sans',sans-serif;transform:scaleX(1.0192);">透視</div><div class="a" style="left:231.5px;top:136px;width:105.5px;height:15.599999999999994px;background:rgba(70,70,70,0.55);border-radius:3px"></div><div class="t" style="left:234.00px;top:135.60px;font-size:13px;line-height:17px;color:#dedede;font-weight:400;font-family:'Liberation Sans',sans-serif;transform:scaleX(0.8077);">デフォルトカメラ</div><svg class="a" style="left:319px;top:137px;" width="16" height="14" viewBox="0 0 16 14"><path d="M2 11 V5 A2 2 0 0 1 4 3 H7 M2 11 H12" fill="none" stroke="#cfcfcf" stroke-width="1.3"/><circle cx="11" cy="8.5" r="2" fill="#cfcfcf"/></svg><div class="a" style="left:50px;top:169.8px;width:115.6px;height:46.9px;background:rgba(70,70,70,0.5);border-radius:3px"></div><div class="t" style="left:104.00px;top:172.00px;font-size:13px;line-height:17px;color:#dcdcdc;font-weight:400;font-family:'Liberation Sans',sans-serif;">選択</div><div class="t" style="left:137.50px;top:172.00px;font-size:13px;line-height:17px;color:#dcdcdc;font-weight:400;font-family:'Liberation Sans',sans-serif;transform:scaleX(0.9615);">合計</div><div class="t" style="left:52.50px;top:196.00px;font-size:13px;line-height:17px;color:#dcdcdc;font-weight:400;font-family:'Liberation Sans',sans-serif;transform:scaleX(0.7692);">ポイント</div><div class="t" style="left:102.50px;top:196.00px;font-size:13px;line-height:17px;color:#dcdcdc;font-weight:400;font-family:'Liberation Sans',sans-serif;transform:scaleX(0.9676);">4</div><div class="t" style="left:136.00px;top:196.00px;font-size:13px;line-height:17px;color:#dcdcdc;font-weight:400;font-family:'Liberation Sans',sans-serif;transform:scaleX(0.9676);">8</div><div class="a" style="left:50px;top:234.4px;width:93.30000000000001px;height:17.19999999999999px;background:rgba(70,70,70,0.55);border-radius:3px"></div><div class="t" style="left:52.50px;top:234.80px;font-size:13px;line-height:17px;color:#dedede;font-weight:400;font-family:'Liberation Sans',sans-serif;transform:scaleX(0.8974);">面取り</div><svg class="a" style="left:120px;top:236px;" width="20" height="14" viewBox="0 0 20 14"><path d="M3 3 L8 5.5 M12 5.5 L17 3" stroke="#9a9a9a" stroke-width="1"/><circle cx="10" cy="6" r="1.3" fill="#f09a30"/><circle cx="3.5" cy="9" r="1.3" fill="#f09a30"/><circle cx="16.5" cy="9" r="1.3" fill="#f09a30"/><path d="M5 11 Q10 14 15 11" fill="none" stroke="#9a9a9a" stroke-width="1"/></svg><div class="a" style="left:50.8px;top:444px;width:104.50000000000001px;height:17.69999999999999px;background:rgba(70,70,70,0.55);border-radius:3px"></div><div class="t" style="left:53.00px;top:444.65px;font-size:13px;line-height:17px;color:#dedede;font-weight:400;font-family:'Liberation Sans',sans-serif;transform:scaleX(0.8049);">ビューの変換: シーン</div><div class="a" style="left:380.3px;top:443.7px;width:140.59999999999997px;height:18.0px;background:rgba(70,70,70,0.55);border-radius:3px"></div><div class="t" style="left:382.60px;top:444.50px;font-size:13px;line-height:17px;color:#dedede;font-weight:400;font-family:'Liberation Sans',sans-serif;transform:scaleX(0.9353);">グリッド間隔 : 50000 cm</div><div class="a" style="left:530px;top:103px;width:478px;height:28px;background:#262626;"></div><div class="t" style="left:539.30px;top:107.70px;font-size:14px;line-height:18px;color:#c0c0c0;font-weight:400;font-family:'Liberation Sans',sans-serif;transform:scaleX(0.6452);">ビュー</div><div class="t" style="left:584.60px;top:107.70px;font-size:14px;line-height:18px;color:#c0c0c0;font-weight:400;font-family:'Liberation Sans',sans-serif;transform:scaleX(0.7048);">カメラ</div><div class="t" style="left:632.40px;top:107.70px;font-size:14px;line-height:18px;color:#c0c0c0;font-weight:400;font-family:'Liberation Sans',sans-serif;transform:scaleX(0.9679);">表示</div><div class="t" style="left:677.10px;top:107.70px;font-size:14px;line-height:18px;color:#c0c0c0;font-weight:400;font-family:'Liberation Sans',sans-serif;transform:scaleX(0.7071);">オプション</div><div class="t" style="left:744.30px;top:107.70px;font-size:14px;line-height:18px;color:#c0c0c0;font-weight:400;font-family:'Liberation Sans',sans-serif;transform:scaleX(0.6946);">フィルタ</div><div class="t" style="left:802.00px;top:107.70px;font-size:14px;line-height:18px;color:#c0c0c0;font-weight:400;font-family:'Liberation Sans',sans-serif;transform:scaleX(0.8143);">パネル</div><svg class="a" style="left:910px;top:106.7px;" width="20" height="20" viewBox="0 0 20 20"><path d="M5 10 V5.5 A1.3 1.3 0 0 1 7.6 5.5 V9 V3.5 A1.3 1.3 0 0 1 10.2 3.5 V9 V4 A1.3 1.3 0 0 1 12.8 4 V9 V6 A1.3 1.3 0 0 1 15.4 6 V12 C15.4 16 13 18 10 18 C7.5 18 6 17 4.5 15 L2.5 11.5 A1.2 1.2 0 0 1 4.5 10.2 Z" fill="#a8a8a8"/></svg><svg class="a" style="left:936px;top:106.7px;" width="20" height="20" viewBox="0 0 20 20"><path d="M10 2 L15.5 8 H4.5 Z M10 18 L15.5 12 H4.5 Z" fill="#a8a8a8"/><rect x="8.6" y="7" width="2.8" height="6" fill="#a8a8a8"/></svg><svg class="a" style="left:961px;top:106.7px;" width="20" height="20" viewBox="0 0 20 20"><path d="M12.5 3.2 A7.5 7.5 0 1 1 6 3.5" fill="none" stroke="#a8a8a8" stroke-width="2"/><path d="M5 1 L9 3.5 L5.5 7" fill="none" stroke="#a8a8a8" stroke-width="2"/><circle cx="10" cy="10.5" r="2.6" fill="#a8a8a8"/></svg><svg class="a" style="left:986px;top:106.7px;" width="20" height="20" viewBox="0 0 20 20"><rect x="2" y="2" width="16" height="16" rx="2" fill="none" stroke="#a8a8a8" stroke-width="2"/><path d="M2 9 H11 V18" fill="none" stroke="#a8a8a8" stroke-width="2"/></svg><svg class="a" style="left:530px;top:131px;overflow:hidden" width="477" height="335" viewBox="0 0 477 335"><rect x="0" y="0" width="477" height="335" fill="#686868"/><rect x="5.15" y="0" width="1.3" height="335" fill="#5d5d5d"/><rect x="28.42" y="0" width="1.3" height="335" fill="#5d5d5d"/><rect x="51.69" y="0" width="1.3" height="335" fill="#5d5d5d"/><rect x="74.96" y="0" width="1.3" height="335" fill="#5d5d5d"/><rect x="98.23" y="0" width="1.3" height="335" fill="#5d5d5d"/><rect x="121.50" y="0" width="1.3" height="335" fill="#5d5d5d"/><rect x="144.77" y="0" width="1.3" height="335" fill="#5d5d5d"/><rect x="168.04" y="0" width="1.3" height="335" fill="#5d5d5d"/><rect x="191.31" y="0" width="1.3" height="335" fill="#5d5d5d"/><rect x="214.58" y="0" width="1.3" height="335" fill="#5d5d5d"/><rect x="237.85" y="0" width="1.3" height="335" fill="#5d5d5d"/><rect x="261.12" y="0" width="1.3" height="335" fill="#5d5d5d"/><rect x="284.39" y="0" width="1.3" height="335" fill="#5d5d5d"/><rect x="307.66" y="0" width="1.3" height="335" fill="#5d5d5d"/><rect x="330.93" y="0" width="1.3" height="335" fill="#5d5d5d"/><rect x="354.20" y="0" width="1.3" height="335" fill="#5d5d5d"/><rect x="377.47" y="0" width="1.3" height="335" fill="#5d5d5d"/><rect x="400.74" y="0" width="1.3" height="335" fill="#5d5d5d"/><rect x="424.01" y="0" width="1.3" height="335" fill="#5d5d5d"/><rect x="447.28" y="0" width="1.3" height="335" fill="#5d5d5d"/><rect x="470.55" y="0" width="1.3" height="335" fill="#5d5d5d"/><rect x="0" y="4.16" width="477" height="1.3" fill="#5d5d5d"/><rect x="0" y="27.43" width="477" height="1.3" fill="#5d5d5d"/><rect x="0" y="50.70" width="477" height="1.3" fill="#5d5d5d"/><rect x="0" y="73.97" width="477" height="1.3" fill="#5d5d5d"/><rect x="0" y="97.24" width="477" height="1.3" fill="#5d5d5d"/><rect x="0" y="120.51" width="477" height="1.3" fill="#5d5d5d"/><rect x="0" y="143.78" width="477" height="1.3" fill="#5d5d5d"/><rect x="0" y="167.05" width="477" height="1.3" fill="#5d5d5d"/><rect x="0" y="190.32" width="477" height="1.3" fill="#5d5d5d"/><rect x="0" y="213.59" width="477" height="1.3" fill="#5d5d5d"/><rect x="0" y="236.86" width="477" height="1.3" fill="#5d5d5d"/><rect x="0" y="260.13" width="477" height="1.3" fill="#5d5d5d"/><rect x="0" y="283.40" width="477" height="1.3" fill="#5d5d5d"/><rect x="0" y="306.67" width="477" height="1.3" fill="#5d5d5d"/><rect x="0" y="329.94" width="477" height="1.3" fill="#5d5d5d"/><path d="M0 167.7 H238.5" stroke="#3c3c3c" stroke-width="1.2"/><path d="M238.5 167.7 V335" stroke="#3c3c3c" stroke-width="1.2"/><path d="M238.5 167.7 V2" stroke="#3a74d8" stroke-width="1.4"/><path d="M234.0 8 L238.5 1.5 L243.0 8" fill="none" stroke="#3a74d8" stroke-width="1.2"/><path d="M238.5 167.7 H475" stroke="#d84a4a" stroke-width="1.3"/><path d="M468 163.2 L475 167.7 L468 172.2" fill="none" stroke="#d84a4a" stroke-width="1.2"/><path d="M157.39999999999998 167.7 H344" stroke="#a8c8e4" stroke-width="2.2"/><circle cx="157.40" cy="167.70" r="3.3" fill="#333"/><circle cx="344.00" cy="167.70" r="3.3" fill="#333"/><rect x="219.65" y="164.95" width="5.5" height="5.5" fill="#f4f4f4"/><rect x="239.15" y="164.95" width="5.5" height="5.5" fill="#f4f4f4"/><rect x="266.95" y="164.95" width="5.5" height="5.5" fill="#f4f4f4"/><rect x="287.35" y="164.95" width="5.5" height="5.5" fill="#f4f4f4"/><rect x="253.05" y="164.95" width="5.5" height="5.5" fill="#f09a30"/><path d="M435 20 V43" stroke="#3a74d8" stroke-width="1.6"/><path d="M435 43 H456" stroke="#d84a4a" stroke-width="1.6"/></svg><div class="t" style="left:961.50px;top:134.50px;font-size:11px;line-height:15px;color:#3a74d8;font-weight:400;font-family:'Liberation Sans',sans-serif;transform:scaleX(1.1285);">Z</div><div class="t" style="left:961.50px;top:169.00px;font-size:10px;line-height:14px;color:#48c068;font-weight:400;font-family:'Liberation Sans',sans-serif;transform:scaleX(1.0492);">Y</div><div class="t" style="left:992.30px;top:168.20px;font-size:12px;line-height:16px;color:#d84a4a;font-weight:400;font-family:'Liberation Sans',sans-serif;transform:scaleX(0.8483);">X</div><div class="a" style="left:533.3px;top:135.8px;width:31.100000000000023px;height:16.69999999999999px;background:rgba(70,70,70,0.55);border-radius:3px"></div><div class="t" style="left:536.00px;top:135.95px;font-size:13px;line-height:17px;color:#dedede;font-weight:400;font-family:'Liberation Sans',sans-serif;">上面</div><div class="a" style="left:877.8px;top:443.7px;width:123.20000000000005px;height:18.0px;background:rgba(70,70,70,0.55);border-radius:3px"></div><div class="t" style="left:880.00px;top:444.50px;font-size:13px;line-height:17px;color:#dedede;font-weight:400;font-family:'Liberation Sans',sans-serif;transform:scaleX(0.9577);">グリッド間隔 : 50 cm</div><div class="a" style="left:46px;top:468px;width:481px;height:31px;background:#262626;"></div><div class="t" style="left:55.30px;top:474.20px;font-size:14px;line-height:18px;color:#c0c0c0;font-weight:400;font-family:'Liberation Sans',sans-serif;transform:scaleX(0.6452);">ビュー</div><div class="t" style="left:100.60px;top:474.20px;font-size:14px;line-height:18px;color:#c0c0c0;font-weight:400;font-family:'Liberation Sans',sans-serif;transform:scaleX(0.7048);">カメラ</div><div class="t" style="left:148.40px;top:474.20px;font-size:14px;line-height:18px;color:#c0c0c0;font-weight:400;font-family:'Liberation Sans',sans-serif;transform:scaleX(0.9679);">表示</div><div class="t" style="left:193.10px;top:474.20px;font-size:14px;line-height:18px;color:#c0c0c0;font-weight:400;font-family:'Liberation Sans',sans-serif;transform:scaleX(0.7071);">オプション</div><div class="t" style="left:260.30px;top:474.20px;font-size:14px;line-height:18px;color:#c0c0c0;font-weight:400;font-family:'Liberation Sans',sans-serif;transform:scaleX(0.6946);">フィルタ</div><div class="t" style="left:318.00px;top:474.20px;font-size:14px;line-height:18px;color:#c0c0c0;font-weight:400;font-family:'Liberation Sans',sans-serif;transform:scaleX(0.8143);">パネル</div><svg class="a" style="left:429px;top:473.2px;" width="20" height="20" viewBox="0 0 20 20"><path d="M5 10 V5.5 A1.3 1.3 0 0 1 7.6 5.5 V9 V3.5 A1.3 1.3 0 0 1 10.2 3.5 V9 V4 A1.3 1.3 0 0 1 12.8 4 V9 V6 A1.3 1.3 0 0 1 15.4 6 V12 C15.4 16 13 18 10 18 C7.5 18 6 17 4.5 15 L2.5 11.5 A1.2 1.2 0 0 1 4.5 10.2 Z" fill="#a8a8a8"/></svg><svg class="a" style="left:455px;top:473.2px;" width="20" height="20" viewBox="0 0 20 20"><path d="M10 2 L15.5 8 H4.5 Z M10 18 L15.5 12 H4.5 Z" fill="#a8a8a8"/><rect x="8.6" y="7" width="2.8" height="6" fill="#a8a8a8"/></svg><svg class="a" style="left:480px;top:473.2px;" width="20" height="20" viewBox="0 0 20 20"><path d="M12.5 3.2 A7.5 7.5 0 1 1 6 3.5" fill="none" stroke="#a8a8a8" stroke-width="2"/><path d="M5 1 L9 3.5 L5.5 7" fill="none" stroke="#a8a8a8" stroke-width="2"/><circle cx="10" cy="10.5" r="2.6" fill="#a8a8a8"/></svg><svg class="a" style="left:505px;top:473.2px;" width="20" height="20" viewBox="0 0 20 20"><rect x="2" y="2" width="16" height="16" rx="2" fill="none" stroke="#a8a8a8" stroke-width="2"/><path d="M2 9 H11 V18" fill="none" stroke="#a8a8a8" stroke-width="2"/></svg><svg class="a" style="left:47px;top:499px;overflow:hidden" width="478" height="334" viewBox="0 0 478 334"><rect x="0" y="0" width="478" height="334" fill="#686868"/><rect x="5.85" y="0" width="1.3" height="334" fill="#5d5d5d"/><rect x="29.12" y="0" width="1.3" height="334" fill="#5d5d5d"/><rect x="52.39" y="0" width="1.3" height="334" fill="#5d5d5d"/><rect x="75.66" y="0" width="1.3" height="334" fill="#5d5d5d"/><rect x="98.93" y="0" width="1.3" height="334" fill="#5d5d5d"/><rect x="122.20" y="0" width="1.3" height="334" fill="#5d5d5d"/><rect x="145.47" y="0" width="1.3" height="334" fill="#5d5d5d"/><rect x="168.74" y="0" width="1.3" height="334" fill="#5d5d5d"/><rect x="192.01" y="0" width="1.3" height="334" fill="#5d5d5d"/><rect x="215.28" y="0" width="1.3" height="334" fill="#5d5d5d"/><rect x="238.55" y="0" width="1.3" height="334" fill="#5d5d5d"/><rect x="261.82" y="0" width="1.3" height="334" fill="#5d5d5d"/><rect x="285.09" y="0" width="1.3" height="334" fill="#5d5d5d"/><rect x="308.36" y="0" width="1.3" height="334" fill="#5d5d5d"/><rect x="331.63" y="0" width="1.3" height="334" fill="#5d5d5d"/><rect x="354.90" y="0" width="1.3" height="334" fill="#5d5d5d"/><rect x="378.17" y="0" width="1.3" height="334" fill="#5d5d5d"/><rect x="401.44" y="0" width="1.3" height="334" fill="#5d5d5d"/><rect x="424.71" y="0" width="1.3" height="334" fill="#5d5d5d"/><rect x="447.98" y="0" width="1.3" height="334" fill="#5d5d5d"/><rect x="471.25" y="0" width="1.3" height="334" fill="#5d5d5d"/><rect x="0" y="3.56" width="478" height="1.3" fill="#5d5d5d"/><rect x="0" y="26.83" width="478" height="1.3" fill="#5d5d5d"/><rect x="0" y="50.10" width="478" height="1.3" fill="#5d5d5d"/><rect x="0" y="73.37" width="478" height="1.3" fill="#5d5d5d"/><rect x="0" y="96.64" width="478" height="1.3" fill="#5d5d5d"/><rect x="0" y="119.91" width="478" height="1.3" fill="#5d5d5d"/><rect x="0" y="143.18" width="478" height="1.3" fill="#5d5d5d"/><rect x="0" y="166.45" width="478" height="1.3" fill="#5d5d5d"/><rect x="0" y="189.72" width="478" height="1.3" fill="#5d5d5d"/><rect x="0" y="212.99" width="478" height="1.3" fill="#5d5d5d"/><rect x="0" y="236.26" width="478" height="1.3" fill="#5d5d5d"/><rect x="0" y="259.53" width="478" height="1.3" fill="#5d5d5d"/><rect x="0" y="282.80" width="478" height="1.3" fill="#5d5d5d"/><rect x="0" y="306.07" width="478" height="1.3" fill="#5d5d5d"/><rect x="0" y="329.34" width="478" height="1.3" fill="#5d5d5d"/><path d="M0 167.10000000000002 H239.2" stroke="#3c3c3c" stroke-width="1.2"/><path d="M239.2 167.10000000000002 V334" stroke="#3c3c3c" stroke-width="1.2"/><path d="M239.2 167.10000000000002 V2" stroke="#48c068" stroke-width="1.3"/><path d="M234.7 8 L239.2 1.5 L243.7 8" fill="none" stroke="#48c068" stroke-width="1.2"/><path d="M239.2 167.10000000000002 H476" stroke="#3a74d8" stroke-width="1.4"/><path d="M469 162.60000000000002 L476 167.10000000000002 L469 171.60000000000002" fill="none" stroke="#3a74d8" stroke-width="1.2"/><path d="M239.2 74.70000000000005 V261.5" stroke="#7cb4e0" stroke-width="2.2"/><path d="M239.2 74.70000000000005 V153" stroke="#58b8a0" stroke-width="1"/><circle cx="239.20" cy="74.70" r="3.3" fill="#333"/><circle cx="239.20" cy="261.50" r="3.3" fill="#333"/><rect x="236.70" y="117.20" width="5" height="5" fill="#f4f4f4"/><rect x="236.70" y="137.30" width="5" height="5" fill="#f4f4f4"/><rect x="236.70" y="165.50" width="5" height="5" fill="#f4f4f4"/><rect x="236.70" y="184.70" width="5" height="5" fill="#f4f4f4"/><rect x="236.70" y="151.30" width="5" height="5" fill="#f09a30"/><path d="M436.3 20 V43" stroke="#48c068" stroke-width="1.6"/><path d="M436.3 43 H458" stroke="#3a74d8" stroke-width="1.6"/></svg><div class="t" style="left:480.00px;top:502.50px;font-size:11px;line-height:15px;color:#48c068;font-weight:400;font-family:'Liberation Sans',sans-serif;transform:scaleX(1.0077);">Y</div><div class="t" style="left:479.50px;top:535.50px;font-size:10px;line-height:14px;color:#d84a4a;font-weight:400;font-family:'Liberation Sans',sans-serif;transform:scaleX(0.9742);">X</div><div class="t" style="left:510.50px;top:534.50px;font-size:12px;line-height:16px;color:#3a74d8;font-weight:400;font-family:'Liberation Sans',sans-serif;transform:scaleX(1.0349);">Z</div><div class="a" style="left:50px;top:502.3px;width:31.5px;height:16.900000000000034px;background:rgba(70,70,70,0.55);border-radius:3px"></div><div class="t" style="left:52.50px;top:502.55px;font-size:13px;line-height:17px;color:#dedede;font-weight:400;font-family:'Liberation Sans',sans-serif;">右面</div><div class="a" style="left:395.5px;top:810px;width:124.0px;height:18px;background:rgba(70,70,70,0.55);border-radius:3px"></div><div class="t" style="left:397.50px;top:810.80px;font-size:13px;line-height:17px;color:#dedede;font-weight:400;font-family:'Liberation Sans',sans-serif;transform:scaleX(0.9577);">グリッド間隔 : 50 cm</div><div class="a" style="left:530px;top:469px;width:478px;height:30px;background:#262626;"></div><div class="t" style="left:539.30px;top:474.70px;font-size:14px;line-height:18px;color:#c0c0c0;font-weight:400;font-family:'Liberation Sans',sans-serif;transform:scaleX(0.6452);">ビュー</div><div class="t" style="left:584.60px;top:474.70px;font-size:14px;line-height:18px;color:#c0c0c0;font-weight:400;font-family:'Liberation Sans',sans-serif;transform:scaleX(0.7048);">カメラ</div><div class="t" style="left:632.40px;top:474.70px;font-size:14px;line-height:18px;color:#c0c0c0;font-weight:400;font-family:'Liberation Sans',sans-serif;transform:scaleX(0.9679);">表示</div><div class="t" style="left:677.10px;top:474.70px;font-size:14px;line-height:18px;color:#c0c0c0;font-weight:400;font-family:'Liberation Sans',sans-serif;transform:scaleX(0.7071);">オプション</div><div class="t" style="left:744.30px;top:474.70px;font-size:14px;line-height:18px;color:#c0c0c0;font-weight:400;font-family:'Liberation Sans',sans-serif;transform:scaleX(0.6946);">フィルタ</div><div class="t" style="left:802.00px;top:474.70px;font-size:14px;line-height:18px;color:#c0c0c0;font-weight:400;font-family:'Liberation Sans',sans-serif;transform:scaleX(0.8143);">パネル</div><svg class="a" style="left:910px;top:473.7px;" width="20" height="20" viewBox="0 0 20 20"><path d="M5 10 V5.5 A1.3 1.3 0 0 1 7.6 5.5 V9 V3.5 A1.3 1.3 0 0 1 10.2 3.5 V9 V4 A1.3 1.3 0 0 1 12.8 4 V9 V6 A1.3 1.3 0 0 1 15.4 6 V12 C15.4 16 13 18 10 18 C7.5 18 6 17 4.5 15 L2.5 11.5 A1.2 1.2 0 0 1 4.5 10.2 Z" fill="#a8a8a8"/></svg><svg class="a" style="left:936px;top:473.7px;" width="20" height="20" viewBox="0 0 20 20"><path d="M10 2 L15.5 8 H4.5 Z M10 18 L15.5 12 H4.5 Z" fill="#a8a8a8"/><rect x="8.6" y="7" width="2.8" height="6" fill="#a8a8a8"/></svg><svg class="a" style="left:961px;top:473.7px;" width="20" height="20" viewBox="0 0 20 20"><path d="M12.5 3.2 A7.5 7.5 0 1 1 6 3.5" fill="none" stroke="#a8a8a8" stroke-width="2"/><path d="M5 1 L9 3.5 L5.5 7" fill="none" stroke="#a8a8a8" stroke-width="2"/><circle cx="10" cy="10.5" r="2.6" fill="#a8a8a8"/></svg><svg class="a" style="left:986px;top:473.7px;" width="20" height="20" viewBox="0 0 20 20"><rect x="2" y="2" width="16" height="16" rx="2" fill="none" stroke="#a8a8a8" stroke-width="2"/><path d="M2 9 H11 V18" fill="none" stroke="#a8a8a8" stroke-width="2"/></svg><svg class="a" style="left:530px;top:499px;overflow:hidden" width="477" height="334" viewBox="0 0 477 334"><rect x="0" y="0" width="477" height="334" fill="#686868"/><rect x="19.70" y="0" width="1.3" height="334" fill="#5d5d5d"/><rect x="59.33" y="0" width="1.3" height="334" fill="#5d5d5d"/><rect x="98.96" y="0" width="1.3" height="334" fill="#5d5d5d"/><rect x="138.59" y="0" width="1.3" height="334" fill="#5d5d5d"/><rect x="178.22" y="0" width="1.3" height="334" fill="#5d5d5d"/><rect x="217.85" y="0" width="1.3" height="334" fill="#5d5d5d"/><rect x="257.48" y="0" width="1.3" height="334" fill="#5d5d5d"/><rect x="297.11" y="0" width="1.3" height="334" fill="#5d5d5d"/><rect x="336.74" y="0" width="1.3" height="334" fill="#5d5d5d"/><rect x="376.37" y="0" width="1.3" height="334" fill="#5d5d5d"/><rect x="416.00" y="0" width="1.3" height="334" fill="#5d5d5d"/><rect x="455.63" y="0" width="1.3" height="334" fill="#5d5d5d"/><rect x="0" y="5.33" width="477" height="1.3" fill="#5d5d5d"/><rect x="0" y="44.96" width="477" height="1.3" fill="#5d5d5d"/><rect x="0" y="84.59" width="477" height="1.3" fill="#5d5d5d"/><rect x="0" y="124.22" width="477" height="1.3" fill="#5d5d5d"/><rect x="0" y="163.85" width="477" height="1.3" fill="#5d5d5d"/><rect x="0" y="203.48" width="477" height="1.3" fill="#5d5d5d"/><rect x="0" y="243.11" width="477" height="1.3" fill="#5d5d5d"/><rect x="0" y="282.74" width="477" height="1.3" fill="#5d5d5d"/><rect x="0" y="322.37" width="477" height="1.3" fill="#5d5d5d"/><path d="M0 164.5 H218.5" stroke="#3c3c3c" stroke-width="1.2"/><path d="M218.5 164.5 V334" stroke="#3c3c3c" stroke-width="1.2"/><path d="M218.5 164.5 V2" stroke="#48c068" stroke-width="1.2"/><path d="M214.0 8 L218.5 1.5 L223.0 8" fill="none" stroke="#48c068" stroke-width="1.1"/><path d="M218.5 164.5 H475" stroke="#d84a4a" stroke-width="1.3"/><path d="M468 160.0 L475 164.5 L468 169.0" fill="none" stroke="#d84a4a" stroke-width="1.2"/><rect x="80" y="8.800000000000011" width="317" height="316.2" fill="none" stroke="#6aaaf0" stroke-width="2"/><path d="M80 8.800000000000011 H397 M80 8.800000000000011 V325" stroke="#b4d8f4" stroke-width="2"/><circle cx="80.00" cy="8.80" r="3.3" fill="#333"/><circle cx="397.00" cy="8.80" r="3.3" fill="#333"/><circle cx="80.00" cy="325.00" r="3.3" fill="#333"/><circle cx="397.00" cy="325.00" r="3.3" fill="#333"/><defs><linearGradient id="cg" x1="0" y1="0" x2="1" y2="0"><stop offset="0" stop-color="#b8dcf8"/><stop offset="0.5" stop-color="#9ccaf0"/><stop offset="1" stop-color="#5aaae8"/></linearGradient></defs><circle cx="247.29999999999995" cy="142.20000000000005" r="57.2" fill="none" stroke="url(#cg)" stroke-width="1.4"/><path d="M223.79999999999995 84.70000000000005 L271.5 84.70000000000005" stroke="#f4f4f4" stroke-width="1.4"/><rect x="221.05" y="81.95" width="5.5" height="5.5" fill="#f4f4f4"/><rect x="268.75" y="81.95" width="5.5" height="5.5" fill="#f4f4f4"/><path d="M223.79999999999995 199.70000000000005 L271.5 199.70000000000005" stroke="#f4f4f4" stroke-width="1.4"/><rect x="221.05" y="196.95" width="5.5" height="5.5" fill="#f4f4f4"/><rect x="268.75" y="196.95" width="5.5" height="5.5" fill="#f4f4f4"/><path d="M190.29999999999995 118.20000000000005 L190.29999999999995 166.20000000000005" stroke="#f4f4f4" stroke-width="1.4"/><rect x="187.55" y="115.45" width="5.5" height="5.5" fill="#f4f4f4"/><rect x="187.55" y="163.45" width="5.5" height="5.5" fill="#f4f4f4"/><path d="M304.79999999999995 118.20000000000005 L304.79999999999995 166.20000000000005" stroke="#f4f4f4" stroke-width="1.4"/><rect x="302.05" y="115.45" width="5.5" height="5.5" fill="#f4f4f4"/><rect x="302.05" y="163.45" width="5.5" height="5.5" fill="#f4f4f4"/><rect x="244.55" y="81.95" width="5.5" height="5.5" fill="#f09a30"/><rect x="244.55" y="196.95" width="5.5" height="5.5" fill="#f09a30"/><rect x="187.55" y="139.45" width="5.5" height="5.5" fill="#f09a30"/><rect x="302.05" y="139.45" width="5.5" height="5.5" fill="#f09a30"/><path d="M290.5 179.39999999999998 L332.4 197.20000000000005 L319.5 203 L335 216.5 L328 221 L313.5 207 L308.5 219.5 Z" fill="#ff10c8"/><path d="M436 20 V43" stroke="#48c068" stroke-width="1.6"/><path d="M436 43 H458" stroke="#d84a4a" stroke-width="1.6"/></svg><div class="t" style="left:962.50px;top:502.50px;font-size:11px;line-height:15px;color:#48c068;font-weight:400;font-family:'Liberation Sans',sans-serif;transform:scaleX(1.0077);">Y</div><div class="t" style="left:962.30px;top:536.00px;font-size:10px;line-height:14px;color:#3a74d8;font-weight:400;font-family:'Liberation Sans',sans-serif;transform:scaleX(1.1458);">Z</div><div class="t" style="left:993.20px;top:534.50px;font-size:12px;line-height:16px;color:#d84a4a;font-weight:400;font-family:'Liberation Sans',sans-serif;transform:scaleX(0.8483);">X</div><div class="a" style="left:533px;top:502.3px;width:31px;height:16.900000000000034px;background:rgba(70,70,70,0.55);border-radius:3px"></div><div class="t" style="left:535.50px;top:502.55px;font-size:13px;line-height:17px;color:#dedede;font-weight:400;font-family:'Liberation Sans',sans-serif;">前面</div><div class="a" style="left:877.8px;top:810px;width:123.20000000000005px;height:18px;background:rgba(70,70,70,0.55);border-radius:3px"></div><div class="t" style="left:880.00px;top:810.80px;font-size:13px;line-height:17px;color:#dedede;font-weight:400;font-family:'Liberation Sans',sans-serif;transform:scaleX(0.9577);">グリッド間隔 : 50 cm</div><div class="a" style="left:1012px;top:102px;width:44px;height:44px;background:#3a3a3a;border-top-left-radius:0px;border-top-right-radius:0px;border-bottom-left-radius:0px;border-bottom-right-radius:0px;"></div><div class="a" style="left:1012px;top:159px;width:44px;height:44px;background:#3a3a3a;border-top-left-radius:4px;border-top-right-radius:4px;border-bottom-left-radius:0px;border-bottom-right-radius:0px;"></div><svg class="a" style="left:1049px;top:196px;" width="6" height="6" viewBox="0 0 6 6"><path d="M6 0 V6 H0 Z" fill="#8a8a8a"/></svg><div class="a" style="left:1012px;top:203px;width:44px;height:45px;background:#3a3a3a;border-top-left-radius:0px;border-top-right-radius:0px;border-bottom-left-radius:0px;border-bottom-right-radius:0px;"></div><div class="a" style="left:1012px;top:203px;width:44px;height:1px;background:#2e2e2e;"></div><svg class="a" style="left:1049px;top:241px;" width="6" height="6" viewBox="0 0 6 6"><path d="M6 0 V6 H0 Z" fill="#8a8a8a"/></svg><div class="a" style="left:1012px;top:248px;width:44px;height:45px;background:#3a3a3a;border-top-left-radius:0px;border-top-right-radius:0px;border-bottom-left-radius:4px;border-bottom-right-radius:4px;"></div><div class="a" style="left:1012px;top:248px;width:44px;height:1px;background:#2e2e2e;"></div><svg class="a" style="left:1049px;top:286px;" width="6" height="6" viewBox="0 0 6 6"><path d="M6 0 V6 H0 Z" fill="#8a8a8a"/></svg><div class="a" style="left:1012px;top:307px;width:44px;height:43px;background:#3a3a3a;border-top-left-radius:4px;border-top-right-radius:4px;border-bottom-left-radius:0px;border-bottom-right-radius:0px;"></div><svg class="a" style="left:1049px;top:343px;" width="6" height="6" viewBox="0 0 6 6"><path d="M6 0 V6 H0 Z" fill="#8a8a8a"/></svg><div class="a" style="left:1012px;top:350px;width:44px;height:46px;background:#3a3a3a;border-top-left-radius:0px;border-top-right-radius:0px;border-bottom-left-radius:4px;border-bottom-right-radius:4px;"></div><div class="a" style="left:1012px;top:350px;width:44px;height:1px;background:#2e2e2e;"></div><svg class="a" style="left:1049px;top:389px;" width="6" height="6" viewBox="0 0 6 6"><path d="M6 0 V6 H0 Z" fill="#8a8a8a"/></svg><div class="a" style="left:1012px;top:401px;width:44px;height:44px;background:#3a3a3a;border-top-left-radius:4px;border-top-right-radius:4px;border-bottom-left-radius:0px;border-bottom-right-radius:0px;"></div><svg class="a" style="left:1049px;top:438px;" width="6" height="6" viewBox="0 0 6 6"><path d="M6 0 V6 H0 Z" fill="#8a8a8a"/></svg><div class="a" style="left:1012px;top:445px;width:44px;height:45px;background:#3a3a3a;border-top-left-radius:0px;border-top-right-radius:0px;border-bottom-left-radius:4px;border-bottom-right-radius:4px;"></div><div class="a" style="left:1012px;top:445px;width:44px;height:1px;background:#2e2e2e;"></div><svg class="a" style="left:1049px;top:483px;" width="6" height="6" viewBox="0 0 6 6"><path d="M6 0 V6 H0 Z" fill="#8a8a8a"/></svg><div class="a" style="left:1012px;top:496px;width:44px;height:45px;background:#3a3a3a;border-top-left-radius:4px;border-top-right-radius:4px;border-bottom-left-radius:4px;border-bottom-right-radius:4px;"></div><svg class="a" style="left:1049px;top:534px;" width="6" height="6" viewBox="0 0 6 6"><path d="M6 0 V6 H0 Z" fill="#8a8a8a"/></svg><div class="a" style="left:1012px;top:554px;width:44px;height:44px;background:#3a3a3a;border-top-left-radius:4px;border-top-right-radius:4px;border-bottom-left-radius:0px;border-bottom-right-radius:0px;"></div><svg class="a" style="left:1049px;top:591px;" width="6" height="6" viewBox="0 0 6 6"><path d="M6 0 V6 H0 Z" fill="#8a8a8a"/></svg><div class="a" style="left:1012px;top:598px;width:44px;height:45px;background:#3a3a3a;border-top-left-radius:0px;border-top-right-radius:0px;border-bottom-left-radius:0px;border-bottom-right-radius:0px;"></div><div class="a" style="left:1012px;top:598px;width:44px;height:1px;background:#2e2e2e;"></div><div class="a" style="left:1012px;top:643px;width:44px;height:45px;background:#3a3a3a;border-top-left-radius:0px;border-top-right-radius:0px;border-bottom-left-radius:0px;border-bottom-right-radius:0px;"></div><div class="a" style="left:1012px;top:643px;width:44px;height:1px;background:#2e2e2e;"></div><svg class="a" style="left:1049px;top:681px;" width="6" height="6" viewBox="0 0 6 6"><path d="M6 0 V6 H0 Z" fill="#8a8a8a"/></svg><div class="a" style="left:1012px;top:688px;width:44px;height:46px;background:#3a3a3a;border-top-left-radius:0px;border-top-right-radius:0px;border-bottom-left-radius:4px;border-bottom-right-radius:4px;"></div><div class="a" style="left:1012px;top:688px;width:44px;height:1px;background:#2e2e2e;"></div><svg class="a" style="left:1049px;top:727px;" width="6" height="6" viewBox="0 0 6 6"><path d="M6 0 V6 H0 Z" fill="#8a8a8a"/></svg><div class="a" style="left:1012px;top:759px;width:44px;height:45px;background:#3a3a3a;border-top-left-radius:4px;border-top-right-radius:4px;border-bottom-left-radius:4px;border-bottom-right-radius:4px;"></div><svg class="a" style="left:1049px;top:797px;" width="6" height="6" viewBox="0 0 6 6"><path d="M6 0 V6 H0 Z" fill="#8a8a8a"/></svg><svg class="a" style="left:1012px;top:102px;" width="44" height="46" viewBox="0 0 44 46"><path d="M11.7 33 V9.5 M7.5 13.5 L11.7 9.2 L15.9 13.5 M11.7 31.8 H35 M31 27.8 L35.2 31.8 L31 36" fill="none" stroke="#c8cdf5" stroke-width="2.6" stroke-linejoin="round"/><circle cx="28.7" cy="16" r="7.6" fill="#c8cdf5"/></svg><svg class="a" style="left:1012px;top:159px;" width="44" height="46" viewBox="0 0 44 46"><rect x="11" y="11" width="23.5" height="24" fill="none" stroke="#80d0f8" stroke-width="3"/></svg><svg class="a" style="left:1012px;top:203px;" width="44" height="46" viewBox="0 0 44 46"><path d="M22 8.2 L34.8 15.5 V30.5 L22 37.8 L9.2 30.5 V15.5 Z" fill="#80d0f8"/><path d="M9.2 15.5 L22 22.8 L34.8 15.5 M22 22.8 V37.8" fill="none" stroke="#383838" stroke-width="1.6"/></svg><svg class="a" style="left:1012px;top:248px;" width="44" height="46" viewBox="0 0 44 46"><path d="M9.5 14.5 V10.2 H34.5 V14.5 M22 10.2 V34.5 M16 34.5 H28" fill="none" stroke="#80d0f8" stroke-width="3"/></svg><svg class="a" style="left:1012px;top:307px;" width="44" height="46" viewBox="0 0 44 46"><path d="M22 8.9 L33.5 14 V29.4 L22 34.2 L10.3 29.4 V14 Z" fill="none" stroke="#f0f0f0" stroke-width="1.2" stroke-dasharray="2.5 2.5"/><circle cx="22" cy="21.5" r="7.8" fill="#58d078"/><rect x="19.8" y="6.7" width="4.4" height="4.4" fill="none" stroke="#f0f0f0" stroke-width="1.3"/><rect x="8.100000000000001" y="11.8" width="4.4" height="4.4" fill="none" stroke="#f0f0f0" stroke-width="1.3"/><rect x="31.3" y="11.8" width="4.4" height="4.4" fill="none" stroke="#f0f0f0" stroke-width="1.3"/><rect x="8.100000000000001" y="27.2" width="4.4" height="4.4" fill="none" stroke="#f0f0f0" stroke-width="1.3"/><rect x="31.3" y="27.2" width="4.4" height="4.4" fill="none" stroke="#f0f0f0" stroke-width="1.3"/><rect x="19.8" y="32.0" width="4.4" height="4.4" fill="none" stroke="#f0f0f0" stroke-width="1.3"/></svg><svg class="a" style="left:1012px;top:350px;" width="44" height="46" viewBox="0 0 44 46"><path d="M22 9.2 L36 17 V33 L22 38.8 L8 33 V17 Z" fill="#58d078"/><path d="M8 17 L22 24.5 L36 17 M22 24.5 V38.8" fill="none" stroke="#383838" stroke-width="2.2"/></svg><svg class="a" style="left:1012px;top:401px;" width="44" height="46" viewBox="0 0 44 46"><path d="M10 14.5 L19.5 9 C27 10.5 33 17 34 30 L24.5 36.2 L15.3 31 C15 28 13 25 10 23.5 Z" fill="none" stroke="#a49cf4" stroke-width="2.6" stroke-linejoin="round"/><path d="M14.5 16.5 C20 18.5 23.5 25 24.3 31.5" fill="none" stroke="#a49cf4" stroke-width="1.6" stroke-linecap="round"/></svg><svg class="a" style="left:1012px;top:445px;" width="44" height="46" viewBox="0 0 44 46"><path d="M11.1 35.8 V12 M7 16 L11.1 11.8 L15.2 16 M11.1 35.5 H36 M32 31.5 L36.2 35.5 L32 39.5" fill="none" stroke="#a49cf4" stroke-width="2.6" stroke-linejoin="round"/><path d="M28.7 11 L34.5 14.2 V21 L28.7 24.3 L23 21 V14.2 Z M23 14.2 L28.7 17.4 L34.5 14.2 M28.7 17.4 V24.3" fill="none" stroke="#a49cf4" stroke-width="1.4" stroke-linejoin="round"/></svg><svg class="a" style="left:1012px;top:496px;" width="44" height="46" viewBox="0 0 44 46"><path d="M10.3 16 L21.8 22.5 V36.5 L10.3 30.2 Z M21.8 9 L33.8 15.2 V29.8 L21.8 23.5 Z" fill="none" stroke="#f0a8f4" stroke-width="2.6" stroke-linejoin="miter"/><path d="M16 26.5 L28 19.5" stroke="#f0a8f4" stroke-width="1.8"/></svg><svg class="a" style="left:1012px;top:554px;" width="44" height="46" viewBox="0 0 44 46"><circle cx="22" cy="21.3" r="13.3" fill="none" stroke="#c8cdf5" stroke-width="2.4"/><ellipse cx="22" cy="21.3" rx="6" ry="13.3" fill="none" stroke="#c8cdf5" stroke-width="2"/><path d="M9 16 H35 M9 26.5 H35" stroke="#c8cdf5" stroke-width="2"/><rect x="25" y="26.5" width="12" height="11" rx="2.5" fill="#000"/><text x="31" y="35.1" font-family="Liberation Sans" font-weight="700" font-size="8.5" fill="#f0f0f0" text-anchor="middle">ST</text></svg><svg class="a" style="left:1012px;top:598px;" width="44" height="46" viewBox="0 0 44 46"><path d="M6.9 11 H37 V18.6 H6.9 Z" fill="#c8cdf5"/><path d="M13 11 L10.5 18.6 M19.5 11 L17 18.6 M26 11 L23.5 18.6 M32.5 11 L30 18.6" stroke="#383838" stroke-width="2.4"/><rect x="8.4" y="18.6" width="27.1" height="16" rx="1.5" fill="none" stroke="#c8cdf5" stroke-width="3"/></svg><svg class="a" style="left:1012px;top:643px;" width="44" height="46" viewBox="0 0 44 46"><path d="M9.6 13.5 H23.6 V22" fill="none" stroke="#c8cdf5" stroke-width="2.6"/><rect x="8.5" y="22.5" width="16.8" height="11" rx="2" fill="none" stroke="#c8cdf5" stroke-width="2.6"/><path d="M28.9 23.8 L37 19.7 V27.5 Z" fill="#c8cdf5"/><rect x="24.5" y="26" width="12.5" height="12.5" rx="2.5" fill="#000"/><text x="30.5" y="34.6" font-family="Liberation Sans" font-weight="700" font-size="8.5" fill="#f0f0f0" text-anchor="middle">ST</text></svg><svg class="a" style="left:1012px;top:688px;" width="44" height="46" viewBox="0 0 44 46"><path d="M17.5 29.5 C13 27 13 16 22 15.5 C30.5 16 31 26 26.5 29.5" fill="none" stroke="#c8cdf5" stroke-width="2.3"/><path d="M22.1 8.4 V12.5 M11.2 12.8 L14.2 15.5 M33 12.8 L30 15.5 M7.3 23.3 H11.3 M32.5 23.3 H36.5 M18 33.9 H26 M20 36.8 H24" stroke="#c8cdf5" stroke-width="2.3" stroke-linecap="round"/><rect x="24.5" y="26.5" width="12.5" height="12" rx="2.5" fill="#000"/><text x="30.5" y="35.1" font-family="Liberation Sans" font-weight="700" font-size="8.5" fill="#f0f0f0" text-anchor="middle">ST</text></svg><svg class="a" style="left:1012px;top:759px;" width="44" height="46" viewBox="0 0 44 46"><path d="M22 8.5 L33.5 15 V28.5 L22 35 L10.5 28.5 V15 Z" fill="none" stroke="#4a4a4a" stroke-width="1.5"/><path d="M18 28 L30.5 15.5" stroke="#4a4a4a" stroke-width="3.6" stroke-linecap="round"/><circle cx="32" cy="13.5" r="2" fill="#4a4a4a"/></svg><div class="a" style="left:1059px;top:66px;width:384px;height:29px;background:#1c1c1c;"></div><div class="a" style="left:1059px;top:67px;width:88px;height:28px;background:#2b2b2b;border-top-right-radius:4px"></div><div class="t" style="left:1073.30px;top:71.80px;font-size:14px;line-height:18px;color:#e8e8e8;font-weight:400;font-family:'Liberation Sans',sans-serif;transform:scaleX(0.6964);">オブジェクト</div><div class="t" style="left:1163.00px;top:71.80px;font-size:14px;line-height:18px;color:#a8a8a8;font-weight:400;font-family:'Liberation Sans',sans-serif;transform:scaleX(0.7000);">テイク</div><div class="a" style="left:1059px;top:95px;width:384px;height:28px;background:#2b2b2b;"></div><div class="a" style="left:1059px;top:123px;width:384px;height:1px;background:#1c1c1c;"></div><svg class="a" style="left:1066px;top:102px;" width="18" height="14" viewBox="0 0 18 14"><rect x="0" y="0.8" width="18" height="2" fill="#9a9a9a"/><rect x="0" y="6" width="18" height="2" fill="#9a9a9a"/><rect x="0" y="11.2" width="18" height="2" fill="#9a9a9a"/></svg><div class="t" style="left:1096.60px;top:99.50px;font-size:14px;line-height:18px;color:#b8b8b8;font-weight:400;font-family:'Liberation Sans',sans-serif;transform:scaleX(0.6893);">ファイル</div><div class="t" style="left:1154.50px;top:99.50px;font-size:14px;line-height:18px;color:#b8b8b8;font-weight:400;font-family:'Liberation Sans',sans-serif;transform:scaleX(0.9464);">編集</div><div class="t" style="left:1199.70px;top:99.50px;font-size:14px;line-height:18px;color:#b8b8b8;font-weight:400;font-family:'Liberation Sans',sans-serif;transform:scaleX(0.9500);">表示</div><div class="t" style="left:1244.50px;top:99.50px;font-size:14px;line-height:18px;color:#b8b8b8;font-weight:400;font-family:'Liberation Sans',sans-serif;transform:scaleX(0.6964);">オブジェクト</div><svg class="a" style="left:1320px;top:103px;" width="10" height="13" viewBox="0 0 10 13"><path d="M2 1.5 L7.5 6.5 L2 11.5" fill="none" stroke="#9a9a9a" stroke-width="1.6"/></svg><svg class="a" style="left:1343.2px;top:97.7px;" width="24" height="24" viewBox="0 0 24 24"><circle cx="10" cy="10" r="5.8" fill="none" stroke="#9a9a9a" stroke-width="2"/><path d="M14.2 14.2 L20.4 19.6" stroke="#9a9a9a" stroke-width="2.2"/></svg><svg class="a" style="left:1371px;top:99px;" width="19" height="20" viewBox="0 0 19 20"><path d="M2 18 V8.5 L9.3 2 L16.6 8.5 V18 H11.5 V11.5 H7 V18 Z" fill="none" stroke="#9a9a9a" stroke-width="2" stroke-linejoin="round"/></svg><svg class="a" style="left:1396px;top:102.3px;" width="18" height="16" viewBox="0 0 18 16"><rect x="0" y="0" width="18" height="2.2" fill="#9a9a9a"/><rect x="4.0" y="5.4" width="10.1" height="2.2" fill="#9a9a9a"/><rect x="7.0" y="10.8" width="4.0" height="2.2" fill="#9a9a9a"/></svg><svg class="a" style="left:1421px;top:100px;" width="20" height="20" viewBox="0 0 20 20"><path d="M8 1.2 H1.2 V17 H17 V10" fill="none" stroke="#9a9a9a" stroke-width="2"/><path d="M7.5 10.5 L16.5 1.5 M11 1.2 H17 V7.2" fill="none" stroke="#9a9a9a" stroke-width="2"/></svg><div class="a" style="left:1059px;top:124px;width:165px;height:27px;background:#1f1f1f;"></div><div class="a" style="left:1224px;top:124px;width:216px;height:27px;background:#222222;"></div><div class="a" style="left:1223px;top:123px;width:1px;height:232px;background:#1f1f1f;"></div><svg class="a" style="left:1068px;top:124px;" width="14" height="16" viewBox="0 0 14 16"><path d="M1.3 0 V14.5 H13" fill="none" stroke="#505050" stroke-width="1"/></svg><svg class="a" style="left:1080px;top:129px;" width="20" height="18" viewBox="0 0 20 18"><path d="M10 2.5 C3 3.5 2 8 8 9.5 C14 11 14 15 9.5 15.5" fill="none" stroke="#7cc8f0" stroke-width="1.6"/><circle cx="10" cy="2.5" r="2" fill="#fff"/><circle cx="10" cy="15.5" r="2" fill="#fff"/></svg><div class="t" style="left:1104.60px;top:129.50px;font-size:14px;line-height:18px;color:#f0b430;font-weight:400;font-family:'Liberation Sans',sans-serif;transform:scaleX(0.9313);">長方形.1</div><div class="a" style="left:1169px;top:131.2px;width:12.7px;height:12.6px;background:#555;border-radius:2px"></div><svg class="a" style="left:1169px;top:131px;" width="13" height="13" viewBox="0 0 13 13"><path d="M3.5 9.5 L9.5 3.5" stroke="#222" stroke-width="2"/></svg><svg class="a" style="left:1188px;top:127px;" width="10" height="22" viewBox="0 0 10 22"><circle cx="5" cy="5.5" r="4" fill="#565656"/><circle cx="5" cy="16.8" r="4" fill="#565656"/></svg><svg class="a" style="left:1201px;top:131px;" width="18" height="13" viewBox="0 0 18 13"><path d="M1.5 6.5 L6 11 L15.5 1.5" fill="none" stroke="#4fd070" stroke-width="2.6"/></svg><div class="a" style="left:1059px;top:355px;width:384px;height:31px;background:#1c1c1c;"></div><div class="a" style="left:1059px;top:358px;width:57px;height:28px;background:#2b2b2b;border-top-right-radius:4px"></div><div class="t" style="left:1073.00px;top:362.50px;font-size:14px;line-height:18px;color:#e8e8e8;font-weight:400;font-family:'Liberation Sans',sans-serif;transform:scaleX(0.9821);">属性</div><div class="a" style="left:1059px;top:386px;width:384px;height:258px;background:#2b2b2b;"></div><div class="a" style="left:1059px;top:413px;width:384px;height:1px;background:#1e1e1e;"></div><svg class="a" style="left:1066px;top:393px;" width="18" height="14" viewBox="0 0 18 14"><rect x="0" y="0.8" width="18" height="2" fill="#9a9a9a"/><rect x="0" y="6" width="18" height="2" fill="#9a9a9a"/><rect x="0" y="11.2" width="18" height="2" fill="#9a9a9a"/></svg><div class="t" style="left:1097.00px;top:391.00px;font-size:14px;line-height:18px;color:#b8b8b8;font-weight:400;font-family:'Liberation Sans',sans-serif;transform:scaleX(0.6905);">モード</div><div class="t" style="left:1144.50px;top:391.00px;font-size:14px;line-height:18px;color:#b8b8b8;font-weight:400;font-family:'Liberation Sans',sans-serif;transform:scaleX(0.9643);">編集</div><svg class="a" style="left:1188px;top:393px;" width="10" height="13" viewBox="0 0 10 13"><path d="M2 1.5 L7.5 6.5 L2 11.5" fill="none" stroke="#9a9a9a" stroke-width="1.6"/></svg><svg class="a" style="left:1244px;top:390px;" width="22" height="20" viewBox="0 0 22 20"><path d="M3 10 H19 M9.5 3 L2.5 10 L9.5 17" fill="none" stroke="#9a9a9a" stroke-width="2.2"/></svg><svg class="a" style="left:1270px;top:390px;" width="22" height="20" viewBox="0 0 22 20"><path d="M2 10 H18 M11.5 3 L18.5 10 L11.5 17" fill="none" stroke="#4a4a4a" stroke-width="2.2"/></svg><svg class="a" style="left:1295px;top:390px;" width="20" height="20" viewBox="0 0 20 20"><path d="M10 18 V2.5 M3 9.5 L10 2.5 L17 9.5" fill="none" stroke="#4a4a4a" stroke-width="2.2"/></svg><svg class="a" style="left:1318.6px;top:388.5px;" width="24" height="24" viewBox="0 0 24 24"><circle cx="10" cy="10" r="6" fill="none" stroke="#9a9a9a" stroke-width="2"/><path d="M14.2 14.2 L19.9 19.8" stroke="#9a9a9a" stroke-width="2.2"/></svg><svg class="a" style="left:1346px;top:392.5px;" width="18" height="16" viewBox="0 0 18 16"><rect x="0" y="0" width="18" height="2.2" fill="#9a9a9a"/><rect x="4.0" y="5.4" width="10.1" height="2.2" fill="#9a9a9a"/><rect x="7.0" y="10.8" width="4.0" height="2.2" fill="#9a9a9a"/></svg><svg class="a" style="left:1371px;top:389px;" width="18" height="22" viewBox="0 0 18 22"><rect x="2" y="9" width="13.8" height="11" rx="1.5" fill="none" stroke="#9a9a9a" stroke-width="2"/><path d="M5 9 V5.5 A4 4 0 0 1 12.5 4" fill="none" stroke="#9a9a9a" stroke-width="2"/><circle cx="8.9" cy="14.5" r="1.6" fill="#9a9a9a"/></svg><svg class="a" style="left:1394px;top:389px;" width="22" height="22" viewBox="0 0 22 22"><circle cx="11" cy="11" r="9.3" fill="none" stroke="#9a9a9a" stroke-width="2"/><circle cx="11" cy="11" r="3.6" fill="none" stroke="#9a9a9a" stroke-width="2"/></svg><svg class="a" style="left:1421px;top:390.5px;" width="20" height="20" viewBox="0 0 20 20"><path d="M8 1.2 H1.2 V17 H17 V10" fill="none" stroke="#9a9a9a" stroke-width="2"/><path d="M7.5 10.5 L16.5 1.5 M11 1.2 H17 V7.2" fill="none" stroke="#9a9a9a" stroke-width="2"/></svg><svg class="a" style="left:1068px;top:424px;" width="24" height="20" viewBox="0 0 24 20"><path d="M2 3 L8.5 7 M13.5 7 L20 3" stroke="#d0d0d0" stroke-width="1.5"/><circle cx="11" cy="7.8" r="1.9" fill="#f0a030"/><path d="M5.5 14 Q11 18.5 16.5 14" fill="none" stroke="#d0d0d0" stroke-width="1.5"/><circle cx="3" cy="12.8" r="1.9" fill="#f0a030"/><circle cx="19" cy="12.8" r="1.9" fill="#f0a030"/></svg><div class="t" style="left:1099.50px;top:422.60px;font-size:14px;line-height:18px;color:#bcbcbc;font-weight:400;font-family:'Liberation Sans',sans-serif;transform:scaleX(0.9048);">面取り</div><div class="a" style="left:1291.4px;top:421.4px;width:143.6px;height:22.7px;background:#383838;border-radius:11px 5px 5px 11px"></div><div class="a" style="left:1409.6px;top:421.4px;width:1px;height:22.7px;background:#2b2b2b;"></div><div class="t" style="left:1300.50px;top:422.70px;font-size:14px;line-height:18px;color:#d0d0d0;font-weight:400;font-family:'Liberation Sans',sans-serif;transform:scaleX(0.7375);">カスタム</div><svg class="a" style="left:1415px;top:428px;" width="12" height="9" viewBox="0 0 12 9"><path d="M1.4 1 H10.6 L6 7.2 Z" fill="#b0b0b0"/></svg><div class="a" style="left:1069px;top:451.8px;width:72px;height:23.2px;background:#575c9f;border-radius:4px"></div><div class="t" style="left:1077.50px;top:454.50px;font-size:14px;line-height:18px;color:#f0f0f0;font-weight:400;font-family:'Liberation Sans',sans-serif;transform:scaleX(0.7857);">オプション</div><div class="a" style="left:1146.5px;top:451.8px;width:53.5px;height:23.2px;background:#575c9f;border-radius:4px"></div><div class="t" style="left:1157.00px;top:454.50px;font-size:14px;line-height:18px;color:#f0f0f0;font-weight:400;font-family:'Liberation Sans',sans-serif;transform:scaleX(0.7857);">ツール</div><div class="t" style="left:1069.30px;top:486.00px;font-size:14px;line-height:18px;color:#f4f4f4;font-weight:700;font-family:'Liberation Sans',sans-serif;transform:scaleX(0.7657);">オプション</div><div class="t" style="left:1096.80px;top:512.60px;font-size:14px;line-height:18px;color:#b8b8b8;font-weight:400;font-family:'Liberation Sans',sans-serif;transform:scaleX(0.6607);">フラット</div><div class="a" style="left:1141.8px;top:515.6px;width:15.2px;height:15.1px;background:transparent;border:2px solid #636363;border-radius:3px"></div><div class="t" style="left:1096.80px;top:539.30px;font-size:14px;line-height:18px;color:#b8b8b8;font-weight:400;font-family:'Liberation Sans',sans-serif;transform:scaleX(0.9643);">半径</div><div class="a" style="left:1141.8px;top:537.9px;width:92.5px;height:22.6px;background:#1c1c1c;border-radius:4px"></div><div class="t" style="left:1157.00px;top:540.30px;font-size:14px;line-height:18px;color:#e4e4e4;font-weight:400;font-family:'Liberation Sans',sans-serif;transform:scaleX(0.9331);">95.298 cm</div><div class="t" style="left:1069.30px;top:568.80px;font-size:14px;line-height:18px;color:#f4f4f4;font-weight:700;font-family:'Liberation Sans',sans-serif;transform:scaleX(0.7714);">ツール</div><div class="t" style="left:1096.80px;top:596.00px;font-size:14px;line-height:18px;color:#b8b8b8;font-weight:400;font-family:'Liberation Sans',sans-serif;transform:scaleX(0.7937);">リアルタイムに更新</div><div class="a" style="left:1203.2px;top:597.2px;width:15.8px;height:15.8px;background:#5a5ea6;border-radius:3px"></div><svg class="a" style="left:1203px;top:597px;" width="16" height="16" viewBox="0 0 16 16"><path d="M3.5 8 L6.8 11.2 L12.5 5" fill="none" stroke="#f4f4f4" stroke-width="2"/></svg><div class="a" style="left:1424.3px;top:479.8px;width:5.3px;height:142px;background:#444;border-radius:3px"></div><div class="a" style="left:1059px;top:620px;width:384px;height:24px;overflow:hidden"><div class="a" style="left:25px;top:9px;width:85px;height:30px;background:#303030;border-radius:13px"></div><div class="a" style="left:130px;top:9px;width:142px;height:30px;background:#353535;border-radius:13px"></div></div><div class="a" style="left:1059px;top:620px;width:384px;height:24px;overflow:hidden"><div class="t" style="left:56.00px;top:13.00px;font-size:14px;line-height:18px;color:#6a6a6a;font-weight:400;font-family:'Liberation Sans',sans-serif;transform:scaleX(1.0357);">適用</div><div class="t" style="left:142.00px;top:13.00px;font-size:14px;line-height:18px;color:#dcdcdc;font-weight:700;font-family:'Liberation Sans',sans-serif;transform:scaleX(0.7597);">新規にトランスフォーム</div></div><div class="a" style="left:1059px;top:644px;width:384px;height:6px;background:#1c1c1c;"></div><div class="a" style="left:1059px;top:650px;width:384px;height:288px;background:#2b2b2b;"></div><svg class="a" style="left:1066px;top:658px;" width="18" height="14" viewBox="0 0 18 14"><rect x="0" y="0.8" width="18" height="2" fill="#9a9a9a"/><rect x="0" y="6" width="18" height="2" fill="#9a9a9a"/><rect x="0" y="11.2" width="18" height="2" fill="#9a9a9a"/></svg><svg class="a" style="left:1172px;top:652px;" width="26" height="26" viewBox="0 0 26 26"><circle cx="13" cy="13" r="12.3" fill="#333"/></svg><div class="a" style="left:1206px;top:653.7px;width:136.8px;height:23.3px;background:#383838;border-radius:4px"></div><div class="t" style="left:1215.00px;top:655.60px;font-size:14px;line-height:18px;color:#d8d8d8;font-weight:400;font-family:'Liberation Sans',sans-serif;transform:scaleX(0.7830);">オブジェクト(相対)</div><svg class="a" style="left:1322px;top:661px;" width="12" height="9" viewBox="0 0 12 9"><path d="M1.4 1 H10.6 L6 7.2 Z" fill="#b8b8b8"/></svg><div class="a" style="left:1349px;top:653.7px;width:86.6px;height:22.3px;background:#303030;border-radius:4px"></div><div class="t" style="left:1357.50px;top:655.60px;font-size:14px;line-height:18px;color:#5a5a5a;font-weight:400;font-family:'Liberation Sans',sans-serif;transform:scaleX(0.7381);">サイズ</div><svg class="a" style="left:1412px;top:661px;" width="12" height="9" viewBox="0 0 12 9"><path d="M1.4 1 H10.6 L6 7.2 Z" fill="#5a5a5a"/></svg><div class="t" style="left:1066.50px;top:689.20px;font-size:14px;line-height:18px;color:#9a9a9a;font-weight:400;font-family:'Liberation Sans',sans-serif;transform:scaleX(1.0167);">X</div><div class="a" style="left:1082.3px;top:687.0px;width:113.29999999999995px;height:22.4px;background:#1c1c1c;border-radius:4px"></div><div class="t" style="left:1102.89px;top:689.50px;font-size:14px;line-height:18px;color:#e0e0e0;font-weight:400;font-family:'Liberation Sans',sans-serif;">11.6869 cm</div><div class="a" style="left:1202.3px;top:687.0px;width:112.90000000000009px;height:22.4px;background:#1c1c1c;border-radius:4px"></div><div class="t" style="left:1250.11px;top:689.50px;font-size:14px;line-height:18px;color:#e0e0e0;font-weight:400;font-family:'Liberation Sans',sans-serif;">0 °</div><div class="a" style="left:1322.7px;top:687.0px;width:111.59999999999991px;height:22.4px;background:#1c1c1c;border-radius:4px"></div><div class="t" style="left:1355.54px;top:689.50px;font-size:14px;line-height:18px;color:#e0e0e0;font-weight:400;font-family:'Liberation Sans',sans-serif;">145 cm</div><div class="t" style="left:1066.50px;top:716.00px;font-size:14px;line-height:18px;color:#9a9a9a;font-weight:400;font-family:'Liberation Sans',sans-serif;transform:scaleX(1.0167);">Y</div><div class="a" style="left:1082.3px;top:713.8px;width:113.29999999999995px;height:22.4px;background:#1c1c1c;border-radius:4px"></div><div class="t" style="left:1102.36px;top:716.30px;font-size:14px;line-height:18px;color:#e0e0e0;font-weight:400;font-family:'Liberation Sans',sans-serif;">31.0995 cm</div><div class="a" style="left:1202.3px;top:713.8px;width:112.90000000000009px;height:22.4px;background:#1c1c1c;border-radius:4px"></div><div class="t" style="left:1250.11px;top:716.30px;font-size:14px;line-height:18px;color:#e0e0e0;font-weight:400;font-family:'Liberation Sans',sans-serif;">0 °</div><div class="a" style="left:1322.7px;top:713.8px;width:111.59999999999991px;height:22.4px;background:#1c1c1c;border-radius:4px"></div><div class="t" style="left:1355.54px;top:716.30px;font-size:14px;line-height:18px;color:#e0e0e0;font-weight:400;font-family:'Liberation Sans',sans-serif;">145 cm</div><div class="t" style="left:1066.50px;top:743.90px;font-size:14px;line-height:18px;color:#9a9a9a;font-weight:400;font-family:'Liberation Sans',sans-serif;transform:scaleX(1.1095);">Z</div><div class="a" style="left:1082.3px;top:741.6999999999999px;width:113.29999999999995px;height:22.4px;background:#1c1c1c;border-radius:4px"></div><div class="t" style="left:1123.78px;top:744.20px;font-size:14px;line-height:18px;color:#e0e0e0;font-weight:400;font-family:'Liberation Sans',sans-serif;">0 cm</div><div class="a" style="left:1202.3px;top:741.6999999999999px;width:112.90000000000009px;height:22.4px;background:#1c1c1c;border-radius:4px"></div><div class="t" style="left:1250.11px;top:744.20px;font-size:14px;line-height:18px;color:#e0e0e0;font-weight:400;font-family:'Liberation Sans',sans-serif;">0 °</div><div class="a" style="left:1322.7px;top:741.6999999999999px;width:111.59999999999991px;height:22.4px;background:#1c1c1c;border-radius:4px"></div><div class="t" style="left:1363.33px;top:744.20px;font-size:14px;line-height:18px;color:#e0e0e0;font-weight:400;font-family:'Liberation Sans',sans-serif;">0 cm</div><svg class="a" style="left:46px;top:837.5px;overflow:hidden" width="962" height="8" viewBox="0 0 962 8"><rect x="0.0" y="0" width="1.5" height="1.5" fill="#474747"/><rect x="0.0" y="4" width="1.5" height="1.5" fill="#474747"/><rect x="3.8" y="0" width="1.5" height="1.5" fill="#474747"/><rect x="3.8" y="4" width="1.5" height="1.5" fill="#474747"/><rect x="7.6" y="0" width="1.5" height="1.5" fill="#474747"/><rect x="7.6" y="4" width="1.5" height="1.5" fill="#474747"/><rect x="11.4" y="0" width="1.5" height="1.5" fill="#474747"/><rect x="11.4" y="4" width="1.5" height="1.5" fill="#474747"/><rect x="15.2" y="0" width="1.5" height="1.5" fill="#474747"/><rect x="15.2" y="4" width="1.5" height="1.5" fill="#474747"/><rect x="19.0" y="0" width="1.5" height="1.5" fill="#474747"/><rect x="19.0" y="4" width="1.5" height="1.5" fill="#474747"/><rect x="22.8" y="0" width="1.5" height="1.5" fill="#474747"/><rect x="22.8" y="4" width="1.5" height="1.5" fill="#474747"/><rect x="26.6" y="0" width="1.5" height="1.5" fill="#474747"/><rect x="26.6" y="4" width="1.5" height="1.5" fill="#474747"/><rect x="30.4" y="0" width="1.5" height="1.5" fill="#474747"/><rect x="30.4" y="4" width="1.5" height="1.5" fill="#474747"/><rect x="34.2" y="0" width="1.5" height="1.5" fill="#474747"/><rect x="34.2" y="4" width="1.5" height="1.5" fill="#474747"/><rect x="38.0" y="0" width="1.5" height="1.5" fill="#474747"/><rect x="38.0" y="4" width="1.5" height="1.5" fill="#474747"/><rect x="41.8" y="0" width="1.5" height="1.5" fill="#474747"/><rect x="41.8" y="4" width="1.5" height="1.5" fill="#474747"/><rect x="45.6" y="0" width="1.5" height="1.5" fill="#474747"/><rect x="45.6" y="4" width="1.5" height="1.5" fill="#474747"/><rect x="49.4" y="0" width="1.5" height="1.5" fill="#474747"/><rect x="49.4" y="4" width="1.5" height="1.5" fill="#474747"/><rect x="53.2" y="0" width="1.5" height="1.5" fill="#474747"/><rect x="53.2" y="4" width="1.5" height="1.5" fill="#474747"/><rect x="57.0" y="0" width="1.5" height="1.5" fill="#474747"/><rect x="57.0" y="4" width="1.5" height="1.5" fill="#474747"/><rect x="60.8" y="0" width="1.5" height="1.5" fill="#474747"/><rect x="60.8" y="4" width="1.5" height="1.5" fill="#474747"/><rect x="64.6" y="0" width="1.5" height="1.5" fill="#474747"/><rect x="64.6" y="4" width="1.5" height="1.5" fill="#474747"/><rect x="68.4" y="0" width="1.5" height="1.5" fill="#474747"/><rect x="68.4" y="4" width="1.5" height="1.5" fill="#474747"/><rect x="72.2" y="0" width="1.5" height="1.5" fill="#474747"/><rect x="72.2" y="4" width="1.5" height="1.5" fill="#474747"/><rect x="76.0" y="0" width="1.5" height="1.5" fill="#474747"/><rect x="76.0" y="4" width="1.5" height="1.5" fill="#474747"/><rect x="79.8" y="0" width="1.5" height="1.5" fill="#474747"/><rect x="79.8" y="4" width="1.5" height="1.5" fill="#474747"/><rect x="83.6" y="0" width="1.5" height="1.5" fill="#474747"/><rect x="83.6" y="4" width="1.5" height="1.5" fill="#474747"/><rect x="87.4" y="0" width="1.5" height="1.5" fill="#474747"/><rect x="87.4" y="4" width="1.5" height="1.5" fill="#474747"/><rect x="91.2" y="0" width="1.5" height="1.5" fill="#474747"/><rect x="91.2" y="4" width="1.5" height="1.5" fill="#474747"/><rect x="95.0" y="0" width="1.5" height="1.5" fill="#474747"/><rect x="95.0" y="4" width="1.5" height="1.5" fill="#474747"/><rect x="98.8" y="0" width="1.5" height="1.5" fill="#474747"/><rect x="98.8" y="4" width="1.5" height="1.5" fill="#474747"/><rect x="102.6" y="0" width="1.5" height="1.5" fill="#474747"/><rect x="102.6" y="4" width="1.5" height="1.5" fill="#474747"/><rect x="106.4" y="0" width="1.5" height="1.5" fill="#474747"/><rect x="106.4" y="4" width="1.5" height="1.5" fill="#474747"/><rect x="110.2" y="0" width="1.5" height="1.5" fill="#474747"/><rect x="110.2" y="4" width="1.5" height="1.5" fill="#474747"/><rect x="114.0" y="0" width="1.5" height="1.5" fill="#474747"/><rect x="114.0" y="4" width="1.5" height="1.5" fill="#474747"/><rect x="117.8" y="0" width="1.5" height="1.5" fill="#474747"/><rect x="117.8" y="4" width="1.5" height="1.5" fill="#474747"/><rect x="121.6" y="0" width="1.5" height="1.5" fill="#474747"/><rect x="121.6" y="4" width="1.5" height="1.5" fill="#474747"/><rect x="125.4" y="0" width="1.5" height="1.5" fill="#474747"/><rect x="125.4" y="4" width="1.5" height="1.5" fill="#474747"/><rect x="129.2" y="0" width="1.5" height="1.5" fill="#474747"/><rect x="129.2" y="4" width="1.5" height="1.5" fill="#474747"/><rect x="133.0" y="0" width="1.5" height="1.5" fill="#474747"/><rect x="133.0" y="4" width="1.5" height="1.5" fill="#474747"/><rect x="136.8" y="0" width="1.5" height="1.5" fill="#474747"/><rect x="136.8" y="4" width="1.5" height="1.5" fill="#474747"/><rect x="140.6" y="0" width="1.5" height="1.5" fill="#474747"/><rect x="140.6" y="4" width="1.5" height="1.5" fill="#474747"/><rect x="144.4" y="0" width="1.5" height="1.5" fill="#474747"/><rect x="144.4" y="4" width="1.5" height="1.5" fill="#474747"/><rect x="148.2" y="0" width="1.5" height="1.5" fill="#474747"/><rect x="148.2" y="4" width="1.5" height="1.5" fill="#474747"/><rect x="152.0" y="0" width="1.5" height="1.5" fill="#474747"/><rect x="152.0" y="4" width="1.5" height="1.5" fill="#474747"/><rect x="155.8" y="0" width="1.5" height="1.5" fill="#474747"/><rect x="155.8" y="4" width="1.5" height="1.5" fill="#474747"/><rect x="159.6" y="0" width="1.5" height="1.5" fill="#474747"/><rect x="159.6" y="4" width="1.5" height="1.5" fill="#474747"/><rect x="163.4" y="0" width="1.5" height="1.5" fill="#474747"/><rect x="163.4" y="4" width="1.5" height="1.5" fill="#474747"/><rect x="167.2" y="0" width="1.5" height="1.5" fill="#474747"/><rect x="167.2" y="4" width="1.5" height="1.5" fill="#474747"/><rect x="171.0" y="0" width="1.5" height="1.5" fill="#474747"/><rect x="171.0" y="4" width="1.5" height="1.5" fill="#474747"/><rect x="174.8" y="0" width="1.5" height="1.5" fill="#474747"/><rect x="174.8" y="4" width="1.5" height="1.5" fill="#474747"/><rect x="178.6" y="0" width="1.5" height="1.5" fill="#474747"/><rect x="178.6" y="4" width="1.5" height="1.5" fill="#474747"/><rect x="182.4" y="0" width="1.5" height="1.5" fill="#474747"/><rect x="182.4" y="4" width="1.5" height="1.5" fill="#474747"/><rect x="186.2" y="0" width="1.5" height="1.5" fill="#474747"/><rect x="186.2" y="4" width="1.5" height="1.5" fill="#474747"/><rect x="190.0" y="0" width="1.5" height="1.5" fill="#474747"/><rect x="190.0" y="4" width="1.5" height="1.5" fill="#474747"/><rect x="193.8" y="0" width="1.5" height="1.5" fill="#474747"/><rect x="193.8" y="4" width="1.5" height="1.5" fill="#474747"/><rect x="197.6" y="0" width="1.5" height="1.5" fill="#474747"/><rect x="197.6" y="4" width="1.5" height="1.5" fill="#474747"/><rect x="201.4" y="0" width="1.5" height="1.5" fill="#474747"/><rect x="201.4" y="4" width="1.5" height="1.5" fill="#474747"/><rect x="205.2" y="0" width="1.5" height="1.5" fill="#474747"/><rect x="205.2" y="4" width="1.5" height="1.5" fill="#474747"/><rect x="209.0" y="0" width="1.5" height="1.5" fill="#474747"/><rect x="209.0" y="4" width="1.5" height="1.5" fill="#474747"/><rect x="212.8" y="0" width="1.5" height="1.5" fill="#474747"/><rect x="212.8" y="4" width="1.5" height="1.5" fill="#474747"/><rect x="216.6" y="0" width="1.5" height="1.5" fill="#474747"/><rect x="216.6" y="4" width="1.5" height="1.5" fill="#474747"/><rect x="220.4" y="0" width="1.5" height="1.5" fill="#474747"/><rect x="220.4" y="4" width="1.5" height="1.5" fill="#474747"/><rect x="224.2" y="0" width="1.5" height="1.5" fill="#474747"/><rect x="224.2" y="4" width="1.5" height="1.5" fill="#474747"/><rect x="228.0" y="0" width="1.5" height="1.5" fill="#474747"/><rect x="228.0" y="4" width="1.5" height="1.5" fill="#474747"/><rect x="231.8" y="0" width="1.5" height="1.5" fill="#474747"/><rect x="231.8" y="4" width="1.5" height="1.5" fill="#474747"/><rect x="235.6" y="0" width="1.5" height="1.5" fill="#474747"/><rect x="235.6" y="4" width="1.5" height="1.5" fill="#474747"/><rect x="239.4" y="0" width="1.5" height="1.5" fill="#474747"/><rect x="239.4" y="4" width="1.5" height="1.5" fill="#474747"/><rect x="243.2" y="0" width="1.5" height="1.5" fill="#474747"/><rect x="243.2" y="4" width="1.5" height="1.5" fill="#474747"/><rect x="247.0" y="0" width="1.5" height="1.5" fill="#474747"/><rect x="247.0" y="4" width="1.5" height="1.5" fill="#474747"/><rect x="250.8" y="0" width="1.5" height="1.5" fill="#474747"/><rect x="250.8" y="4" width="1.5" height="1.5" fill="#474747"/><rect x="254.6" y="0" width="1.5" height="1.5" fill="#474747"/><rect x="254.6" y="4" width="1.5" height="1.5" fill="#474747"/><rect x="258.4" y="0" width="1.5" height="1.5" fill="#474747"/><rect x="258.4" y="4" width="1.5" height="1.5" fill="#474747"/><rect x="262.2" y="0" width="1.5" height="1.5" fill="#474747"/><rect x="262.2" y="4" width="1.5" height="1.5" fill="#474747"/><rect x="266.0" y="0" width="1.5" height="1.5" fill="#474747"/><rect x="266.0" y="4" width="1.5" height="1.5" fill="#474747"/><rect x="269.8" y="0" width="1.5" height="1.5" fill="#474747"/><rect x="269.8" y="4" width="1.5" height="1.5" fill="#474747"/><rect x="273.6" y="0" width="1.5" height="1.5" fill="#474747"/><rect x="273.6" y="4" width="1.5" height="1.5" fill="#474747"/><rect x="277.4" y="0" width="1.5" height="1.5" fill="#474747"/><rect x="277.4" y="4" width="1.5" height="1.5" fill="#474747"/><rect x="281.2" y="0" width="1.5" height="1.5" fill="#474747"/><rect x="281.2" y="4" width="1.5" height="1.5" fill="#474747"/><rect x="285.0" y="0" width="1.5" height="1.5" fill="#474747"/><rect x="285.0" y="4" width="1.5" height="1.5" fill="#474747"/><rect x="288.8" y="0" width="1.5" height="1.5" fill="#474747"/><rect x="288.8" y="4" width="1.5" height="1.5" fill="#474747"/><rect x="292.6" y="0" width="1.5" height="1.5" fill="#474747"/><rect x="292.6" y="4" width="1.5" height="1.5" fill="#474747"/><rect x="296.4" y="0" width="1.5" height="1.5" fill="#474747"/><rect x="296.4" y="4" width="1.5" height="1.5" fill="#474747"/><rect x="300.2" y="0" width="1.5" height="1.5" fill="#474747"/><rect x="300.2" y="4" width="1.5" height="1.5" fill="#474747"/><rect x="304.0" y="0" width="1.5" height="1.5" fill="#474747"/><rect x="304.0" y="4" width="1.5" height="1.5" fill="#474747"/><rect x="307.8" y="0" width="1.5" height="1.5" fill="#474747"/><rect x="307.8" y="4" width="1.5" height="1.5" fill="#474747"/><rect x="311.6" y="0" width="1.5" height="1.5" fill="#474747"/><rect x="311.6" y="4" width="1.5" height="1.5" fill="#474747"/><rect x="315.4" y="0" width="1.5" height="1.5" fill="#474747"/><rect x="315.4" y="4" width="1.5" height="1.5" fill="#474747"/><rect x="319.2" y="0" width="1.5" height="1.5" fill="#474747"/><rect x="319.2" y="4" width="1.5" height="1.5" fill="#474747"/><rect x="323.0" y="0" width="1.5" height="1.5" fill="#474747"/><rect x="323.0" y="4" width="1.5" height="1.5" fill="#474747"/><rect x="326.8" y="0" width="1.5" height="1.5" fill="#474747"/><rect x="326.8" y="4" width="1.5" height="1.5" fill="#474747"/><rect x="330.6" y="0" width="1.5" height="1.5" fill="#474747"/><rect x="330.6" y="4" width="1.5" height="1.5" fill="#474747"/><rect x="334.4" y="0" width="1.5" height="1.5" fill="#474747"/><rect x="334.4" y="4" width="1.5" height="1.5" fill="#474747"/><rect x="338.2" y="0" width="1.5" height="1.5" fill="#474747"/><rect x="338.2" y="4" width="1.5" height="1.5" fill="#474747"/><rect x="342.0" y="0" width="1.5" height="1.5" fill="#474747"/><rect x="342.0" y="4" width="1.5" height="1.5" fill="#474747"/><rect x="345.8" y="0" width="1.5" height="1.5" fill="#474747"/><rect x="345.8" y="4" width="1.5" height="1.5" fill="#474747"/><rect x="349.6" y="0" width="1.5" height="1.5" fill="#474747"/><rect x="349.6" y="4" width="1.5" height="1.5" fill="#474747"/><rect x="353.4" y="0" width="1.5" height="1.5" fill="#474747"/><rect x="353.4" y="4" width="1.5" height="1.5" fill="#474747"/><rect x="357.2" y="0" width="1.5" height="1.5" fill="#474747"/><rect x="357.2" y="4" width="1.5" height="1.5" fill="#474747"/><rect x="361.0" y="0" width="1.5" height="1.5" fill="#474747"/><rect x="361.0" y="4" width="1.5" height="1.5" fill="#474747"/><rect x="364.8" y="0" width="1.5" height="1.5" fill="#474747"/><rect x="364.8" y="4" width="1.5" height="1.5" fill="#474747"/><rect x="368.6" y="0" width="1.5" height="1.5" fill="#474747"/><rect x="368.6" y="4" width="1.5" height="1.5" fill="#474747"/><rect x="372.4" y="0" width="1.5" height="1.5" fill="#474747"/><rect x="372.4" y="4" width="1.5" height="1.5" fill="#474747"/><rect x="376.2" y="0" width="1.5" height="1.5" fill="#474747"/><rect x="376.2" y="4" width="1.5" height="1.5" fill="#474747"/><rect x="380.0" y="0" width="1.5" height="1.5" fill="#474747"/><rect x="380.0" y="4" width="1.5" height="1.5" fill="#474747"/><rect x="383.8" y="0" width="1.5" height="1.5" fill="#474747"/><rect x="383.8" y="4" width="1.5" height="1.5" fill="#474747"/><rect x="387.6" y="0" width="1.5" height="1.5" fill="#474747"/><rect x="387.6" y="4" width="1.5" height="1.5" fill="#474747"/><rect x="391.4" y="0" width="1.5" height="1.5" fill="#474747"/><rect x="391.4" y="4" width="1.5" height="1.5" fill="#474747"/><rect x="395.2" y="0" width="1.5" height="1.5" fill="#474747"/><rect x="395.2" y="4" width="1.5" height="1.5" fill="#474747"/><rect x="399.0" y="0" width="1.5" height="1.5" fill="#474747"/><rect x="399.0" y="4" width="1.5" height="1.5" fill="#474747"/><rect x="402.8" y="0" width="1.5" height="1.5" fill="#474747"/><rect x="402.8" y="4" width="1.5" height="1.5" fill="#474747"/><rect x="406.6" y="0" width="1.5" height="1.5" fill="#474747"/><rect x="406.6" y="4" width="1.5" height="1.5" fill="#474747"/><rect x="410.4" y="0" width="1.5" height="1.5" fill="#474747"/><rect x="410.4" y="4" width="1.5" height="1.5" fill="#474747"/><rect x="414.2" y="0" width="1.5" height="1.5" fill="#474747"/><rect x="414.2" y="4" width="1.5" height="1.5" fill="#474747"/><rect x="418.0" y="0" width="1.5" height="1.5" fill="#474747"/><rect x="418.0" y="4" width="1.5" height="1.5" fill="#474747"/><rect x="421.8" y="0" width="1.5" height="1.5" fill="#474747"/><rect x="421.8" y="4" width="1.5" height="1.5" fill="#474747"/><rect x="425.6" y="0" width="1.5" height="1.5" fill="#474747"/><rect x="425.6" y="4" width="1.5" height="1.5" fill="#474747"/><rect x="429.4" y="0" width="1.5" height="1.5" fill="#474747"/><rect x="429.4" y="4" width="1.5" height="1.5" fill="#474747"/><rect x="433.2" y="0" width="1.5" height="1.5" fill="#474747"/><rect x="433.2" y="4" width="1.5" height="1.5" fill="#474747"/><rect x="437.0" y="0" width="1.5" height="1.5" fill="#474747"/><rect x="437.0" y="4" width="1.5" height="1.5" fill="#474747"/><rect x="440.8" y="0" width="1.5" height="1.5" fill="#474747"/><rect x="440.8" y="4" width="1.5" height="1.5" fill="#474747"/><rect x="444.6" y="0" width="1.5" height="1.5" fill="#474747"/><rect x="444.6" y="4" width="1.5" height="1.5" fill="#474747"/><rect x="448.4" y="0" width="1.5" height="1.5" fill="#474747"/><rect x="448.4" y="4" width="1.5" height="1.5" fill="#474747"/><rect x="452.2" y="0" width="1.5" height="1.5" fill="#474747"/><rect x="452.2" y="4" width="1.5" height="1.5" fill="#474747"/><rect x="456.0" y="0" width="1.5" height="1.5" fill="#474747"/><rect x="456.0" y="4" width="1.5" height="1.5" fill="#474747"/><rect x="459.8" y="0" width="1.5" height="1.5" fill="#474747"/><rect x="459.8" y="4" width="1.5" height="1.5" fill="#474747"/><rect x="463.6" y="0" width="1.5" height="1.5" fill="#474747"/><rect x="463.6" y="4" width="1.5" height="1.5" fill="#474747"/><rect x="467.4" y="0" width="1.5" height="1.5" fill="#474747"/><rect x="467.4" y="4" width="1.5" height="1.5" fill="#474747"/><rect x="471.2" y="0" width="1.5" height="1.5" fill="#474747"/><rect x="471.2" y="4" width="1.5" height="1.5" fill="#474747"/><rect x="475.0" y="0" width="1.5" height="1.5" fill="#474747"/><rect x="475.0" y="4" width="1.5" height="1.5" fill="#474747"/><rect x="478.8" y="0" width="1.5" height="1.5" fill="#474747"/><rect x="478.8" y="4" width="1.5" height="1.5" fill="#474747"/><rect x="482.6" y="0" width="1.5" height="1.5" fill="#474747"/><rect x="482.6" y="4" width="1.5" height="1.5" fill="#474747"/><rect x="486.4" y="0" width="1.5" height="1.5" fill="#474747"/><rect x="486.4" y="4" width="1.5" height="1.5" fill="#474747"/><rect x="490.2" y="0" width="1.5" height="1.5" fill="#474747"/><rect x="490.2" y="4" width="1.5" height="1.5" fill="#474747"/><rect x="494.0" y="0" width="1.5" height="1.5" fill="#474747"/><rect x="494.0" y="4" width="1.5" height="1.5" fill="#474747"/><rect x="497.8" y="0" width="1.5" height="1.5" fill="#474747"/><rect x="497.8" y="4" width="1.5" height="1.5" fill="#474747"/><rect x="501.6" y="0" width="1.5" height="1.5" fill="#474747"/><rect x="501.6" y="4" width="1.5" height="1.5" fill="#474747"/><rect x="505.4" y="0" width="1.5" height="1.5" fill="#474747"/><rect x="505.4" y="4" width="1.5" height="1.5" fill="#474747"/><rect x="509.2" y="0" width="1.5" height="1.5" fill="#474747"/><rect x="509.2" y="4" width="1.5" height="1.5" fill="#474747"/><rect x="513.0" y="0" width="1.5" height="1.5" fill="#474747"/><rect x="513.0" y="4" width="1.5" height="1.5" fill="#474747"/><rect x="516.8" y="0" width="1.5" height="1.5" fill="#474747"/><rect x="516.8" y="4" width="1.5" height="1.5" fill="#474747"/><rect x="520.6" y="0" width="1.5" height="1.5" fill="#474747"/><rect x="520.6" y="4" width="1.5" height="1.5" fill="#474747"/><rect x="524.4" y="0" width="1.5" height="1.5" fill="#474747"/><rect x="524.4" y="4" width="1.5" height="1.5" fill="#474747"/><rect x="528.2" y="0" width="1.5" height="1.5" fill="#474747"/><rect x="528.2" y="4" width="1.5" height="1.5" fill="#474747"/><rect x="532.0" y="0" width="1.5" height="1.5" fill="#474747"/><rect x="532.0" y="4" width="1.5" height="1.5" fill="#474747"/><rect x="535.8" y="0" width="1.5" height="1.5" fill="#474747"/><rect x="535.8" y="4" width="1.5" height="1.5" fill="#474747"/><rect x="539.6" y="0" width="1.5" height="1.5" fill="#474747"/><rect x="539.6" y="4" width="1.5" height="1.5" fill="#474747"/><rect x="543.4" y="0" width="1.5" height="1.5" fill="#474747"/><rect x="543.4" y="4" width="1.5" height="1.5" fill="#474747"/><rect x="547.2" y="0" width="1.5" height="1.5" fill="#474747"/><rect x="547.2" y="4" width="1.5" height="1.5" fill="#474747"/><rect x="551.0" y="0" width="1.5" height="1.5" fill="#474747"/><rect x="551.0" y="4" width="1.5" height="1.5" fill="#474747"/><rect x="554.8" y="0" width="1.5" height="1.5" fill="#474747"/><rect x="554.8" y="4" width="1.5" height="1.5" fill="#474747"/><rect x="558.6" y="0" width="1.5" height="1.5" fill="#474747"/><rect x="558.6" y="4" width="1.5" height="1.5" fill="#474747"/><rect x="562.4" y="0" width="1.5" height="1.5" fill="#474747"/><rect x="562.4" y="4" width="1.5" height="1.5" fill="#474747"/><rect x="566.2" y="0" width="1.5" height="1.5" fill="#474747"/><rect x="566.2" y="4" width="1.5" height="1.5" fill="#474747"/><rect x="570.0" y="0" width="1.5" height="1.5" fill="#474747"/><rect x="570.0" y="4" width="1.5" height="1.5" fill="#474747"/><rect x="573.8" y="0" width="1.5" height="1.5" fill="#474747"/><rect x="573.8" y="4" width="1.5" height="1.5" fill="#474747"/><rect x="577.6" y="0" width="1.5" height="1.5" fill="#474747"/><rect x="577.6" y="4" width="1.5" height="1.5" fill="#474747"/><rect x="581.4" y="0" width="1.5" height="1.5" fill="#474747"/><rect x="581.4" y="4" width="1.5" height="1.5" fill="#474747"/><rect x="585.2" y="0" width="1.5" height="1.5" fill="#474747"/><rect x="585.2" y="4" width="1.5" height="1.5" fill="#474747"/><rect x="589.0" y="0" width="1.5" height="1.5" fill="#474747"/><rect x="589.0" y="4" width="1.5" height="1.5" fill="#474747"/><rect x="592.8" y="0" width="1.5" height="1.5" fill="#474747"/><rect x="592.8" y="4" width="1.5" height="1.5" fill="#474747"/><rect x="596.6" y="0" width="1.5" height="1.5" fill="#474747"/><rect x="596.6" y="4" width="1.5" height="1.5" fill="#474747"/><rect x="600.4" y="0" width="1.5" height="1.5" fill="#474747"/><rect x="600.4" y="4" width="1.5" height="1.5" fill="#474747"/><rect x="604.2" y="0" width="1.5" height="1.5" fill="#474747"/><rect x="604.2" y="4" width="1.5" height="1.5" fill="#474747"/><rect x="608.0" y="0" width="1.5" height="1.5" fill="#474747"/><rect x="608.0" y="4" width="1.5" height="1.5" fill="#474747"/><rect x="611.8" y="0" width="1.5" height="1.5" fill="#474747"/><rect x="611.8" y="4" width="1.5" height="1.5" fill="#474747"/><rect x="615.6" y="0" width="1.5" height="1.5" fill="#474747"/><rect x="615.6" y="4" width="1.5" height="1.5" fill="#474747"/><rect x="619.4" y="0" width="1.5" height="1.5" fill="#474747"/><rect x="619.4" y="4" width="1.5" height="1.5" fill="#474747"/><rect x="623.2" y="0" width="1.5" height="1.5" fill="#474747"/><rect x="623.2" y="4" width="1.5" height="1.5" fill="#474747"/><rect x="627.0" y="0" width="1.5" height="1.5" fill="#474747"/><rect x="627.0" y="4" width="1.5" height="1.5" fill="#474747"/><rect x="630.8" y="0" width="1.5" height="1.5" fill="#474747"/><rect x="630.8" y="4" width="1.5" height="1.5" fill="#474747"/><rect x="634.6" y="0" width="1.5" height="1.5" fill="#474747"/><rect x="634.6" y="4" width="1.5" height="1.5" fill="#474747"/><rect x="638.4" y="0" width="1.5" height="1.5" fill="#474747"/><rect x="638.4" y="4" width="1.5" height="1.5" fill="#474747"/><rect x="642.2" y="0" width="1.5" height="1.5" fill="#474747"/><rect x="642.2" y="4" width="1.5" height="1.5" fill="#474747"/><rect x="646.0" y="0" width="1.5" height="1.5" fill="#474747"/><rect x="646.0" y="4" width="1.5" height="1.5" fill="#474747"/><rect x="649.8" y="0" width="1.5" height="1.5" fill="#474747"/><rect x="649.8" y="4" width="1.5" height="1.5" fill="#474747"/><rect x="653.6" y="0" width="1.5" height="1.5" fill="#474747"/><rect x="653.6" y="4" width="1.5" height="1.5" fill="#474747"/><rect x="657.4" y="0" width="1.5" height="1.5" fill="#474747"/><rect x="657.4" y="4" width="1.5" height="1.5" fill="#474747"/><rect x="661.2" y="0" width="1.5" height="1.5" fill="#474747"/><rect x="661.2" y="4" width="1.5" height="1.5" fill="#474747"/><rect x="665.0" y="0" width="1.5" height="1.5" fill="#474747"/><rect x="665.0" y="4" width="1.5" height="1.5" fill="#474747"/><rect x="668.8" y="0" width="1.5" height="1.5" fill="#474747"/><rect x="668.8" y="4" width="1.5" height="1.5" fill="#474747"/><rect x="672.6" y="0" width="1.5" height="1.5" fill="#474747"/><rect x="672.6" y="4" width="1.5" height="1.5" fill="#474747"/><rect x="676.4" y="0" width="1.5" height="1.5" fill="#474747"/><rect x="676.4" y="4" width="1.5" height="1.5" fill="#474747"/><rect x="680.2" y="0" width="1.5" height="1.5" fill="#474747"/><rect x="680.2" y="4" width="1.5" height="1.5" fill="#474747"/><rect x="684.0" y="0" width="1.5" height="1.5" fill="#474747"/><rect x="684.0" y="4" width="1.5" height="1.5" fill="#474747"/><rect x="687.8" y="0" width="1.5" height="1.5" fill="#474747"/><rect x="687.8" y="4" width="1.5" height="1.5" fill="#474747"/><rect x="691.6" y="0" width="1.5" height="1.5" fill="#474747"/><rect x="691.6" y="4" width="1.5" height="1.5" fill="#474747"/><rect x="695.4" y="0" width="1.5" height="1.5" fill="#474747"/><rect x="695.4" y="4" width="1.5" height="1.5" fill="#474747"/><rect x="699.2" y="0" width="1.5" height="1.5" fill="#474747"/><rect x="699.2" y="4" width="1.5" height="1.5" fill="#474747"/><rect x="703.0" y="0" width="1.5" height="1.5" fill="#474747"/><rect x="703.0" y="4" width="1.5" height="1.5" fill="#474747"/><rect x="706.8" y="0" width="1.5" height="1.5" fill="#474747"/><rect x="706.8" y="4" width="1.5" height="1.5" fill="#474747"/><rect x="710.6" y="0" width="1.5" height="1.5" fill="#474747"/><rect x="710.6" y="4" width="1.5" height="1.5" fill="#474747"/><rect x="714.4" y="0" width="1.5" height="1.5" fill="#474747"/><rect x="714.4" y="4" width="1.5" height="1.5" fill="#474747"/><rect x="718.2" y="0" width="1.5" height="1.5" fill="#474747"/><rect x="718.2" y="4" width="1.5" height="1.5" fill="#474747"/><rect x="722.0" y="0" width="1.5" height="1.5" fill="#474747"/><rect x="722.0" y="4" width="1.5" height="1.5" fill="#474747"/><rect x="725.8" y="0" width="1.5" height="1.5" fill="#474747"/><rect x="725.8" y="4" width="1.5" height="1.5" fill="#474747"/><rect x="729.6" y="0" width="1.5" height="1.5" fill="#474747"/><rect x="729.6" y="4" width="1.5" height="1.5" fill="#474747"/><rect x="733.4" y="0" width="1.5" height="1.5" fill="#474747"/><rect x="733.4" y="4" width="1.5" height="1.5" fill="#474747"/><rect x="737.2" y="0" width="1.5" height="1.5" fill="#474747"/><rect x="737.2" y="4" width="1.5" height="1.5" fill="#474747"/><rect x="741.0" y="0" width="1.5" height="1.5" fill="#474747"/><rect x="741.0" y="4" width="1.5" height="1.5" fill="#474747"/><rect x="744.8" y="0" width="1.5" height="1.5" fill="#474747"/><rect x="744.8" y="4" width="1.5" height="1.5" fill="#474747"/><rect x="748.6" y="0" width="1.5" height="1.5" fill="#474747"/><rect x="748.6" y="4" width="1.5" height="1.5" fill="#474747"/><rect x="752.4" y="0" width="1.5" height="1.5" fill="#474747"/><rect x="752.4" y="4" width="1.5" height="1.5" fill="#474747"/><rect x="756.2" y="0" width="1.5" height="1.5" fill="#474747"/><rect x="756.2" y="4" width="1.5" height="1.5" fill="#474747"/><rect x="760.0" y="0" width="1.5" height="1.5" fill="#474747"/><rect x="760.0" y="4" width="1.5" height="1.5" fill="#474747"/><rect x="763.8" y="0" width="1.5" height="1.5" fill="#474747"/><rect x="763.8" y="4" width="1.5" height="1.5" fill="#474747"/><rect x="767.6" y="0" width="1.5" height="1.5" fill="#474747"/><rect x="767.6" y="4" width="1.5" height="1.5" fill="#474747"/><rect x="771.4" y="0" width="1.5" height="1.5" fill="#474747"/><rect x="771.4" y="4" width="1.5" height="1.5" fill="#474747"/><rect x="775.2" y="0" width="1.5" height="1.5" fill="#474747"/><rect x="775.2" y="4" width="1.5" height="1.5" fill="#474747"/><rect x="779.0" y="0" width="1.5" height="1.5" fill="#474747"/><rect x="779.0" y="4" width="1.5" height="1.5" fill="#474747"/><rect x="782.8" y="0" width="1.5" height="1.5" fill="#474747"/><rect x="782.8" y="4" width="1.5" height="1.5" fill="#474747"/><rect x="786.6" y="0" width="1.5" height="1.5" fill="#474747"/><rect x="786.6" y="4" width="1.5" height="1.5" fill="#474747"/><rect x="790.4" y="0" width="1.5" height="1.5" fill="#474747"/><rect x="790.4" y="4" width="1.5" height="1.5" fill="#474747"/><rect x="794.2" y="0" width="1.5" height="1.5" fill="#474747"/><rect x="794.2" y="4" width="1.5" height="1.5" fill="#474747"/><rect x="798.0" y="0" width="1.5" height="1.5" fill="#474747"/><rect x="798.0" y="4" width="1.5" height="1.5" fill="#474747"/><rect x="801.8" y="0" width="1.5" height="1.5" fill="#474747"/><rect x="801.8" y="4" width="1.5" height="1.5" fill="#474747"/><rect x="805.6" y="0" width="1.5" height="1.5" fill="#474747"/><rect x="805.6" y="4" width="1.5" height="1.5" fill="#474747"/><rect x="809.4" y="0" width="1.5" height="1.5" fill="#474747"/><rect x="809.4" y="4" width="1.5" height="1.5" fill="#474747"/><rect x="813.2" y="0" width="1.5" height="1.5" fill="#474747"/><rect x="813.2" y="4" width="1.5" height="1.5" fill="#474747"/><rect x="817.0" y="0" width="1.5" height="1.5" fill="#474747"/><rect x="817.0" y="4" width="1.5" height="1.5" fill="#474747"/><rect x="820.8" y="0" width="1.5" height="1.5" fill="#474747"/><rect x="820.8" y="4" width="1.5" height="1.5" fill="#474747"/><rect x="824.6" y="0" width="1.5" height="1.5" fill="#474747"/><rect x="824.6" y="4" width="1.5" height="1.5" fill="#474747"/><rect x="828.4" y="0" width="1.5" height="1.5" fill="#474747"/><rect x="828.4" y="4" width="1.5" height="1.5" fill="#474747"/><rect x="832.2" y="0" width="1.5" height="1.5" fill="#474747"/><rect x="832.2" y="4" width="1.5" height="1.5" fill="#474747"/><rect x="836.0" y="0" width="1.5" height="1.5" fill="#474747"/><rect x="836.0" y="4" width="1.5" height="1.5" fill="#474747"/><rect x="839.8" y="0" width="1.5" height="1.5" fill="#474747"/><rect x="839.8" y="4" width="1.5" height="1.5" fill="#474747"/><rect x="843.6" y="0" width="1.5" height="1.5" fill="#474747"/><rect x="843.6" y="4" width="1.5" height="1.5" fill="#474747"/><rect x="847.4" y="0" width="1.5" height="1.5" fill="#474747"/><rect x="847.4" y="4" width="1.5" height="1.5" fill="#474747"/><rect x="851.2" y="0" width="1.5" height="1.5" fill="#474747"/><rect x="851.2" y="4" width="1.5" height="1.5" fill="#474747"/><rect x="855.0" y="0" width="1.5" height="1.5" fill="#474747"/><rect x="855.0" y="4" width="1.5" height="1.5" fill="#474747"/><rect x="858.8" y="0" width="1.5" height="1.5" fill="#474747"/><rect x="858.8" y="4" width="1.5" height="1.5" fill="#474747"/><rect x="862.6" y="0" width="1.5" height="1.5" fill="#474747"/><rect x="862.6" y="4" width="1.5" height="1.5" fill="#474747"/><rect x="866.4" y="0" width="1.5" height="1.5" fill="#474747"/><rect x="866.4" y="4" width="1.5" height="1.5" fill="#474747"/><rect x="870.2" y="0" width="1.5" height="1.5" fill="#474747"/><rect x="870.2" y="4" width="1.5" height="1.5" fill="#474747"/><rect x="874.0" y="0" width="1.5" height="1.5" fill="#474747"/><rect x="874.0" y="4" width="1.5" height="1.5" fill="#474747"/><rect x="877.8" y="0" width="1.5" height="1.5" fill="#474747"/><rect x="877.8" y="4" width="1.5" height="1.5" fill="#474747"/><rect x="881.6" y="0" width="1.5" height="1.5" fill="#474747"/><rect x="881.6" y="4" width="1.5" height="1.5" fill="#474747"/><rect x="885.4" y="0" width="1.5" height="1.5" fill="#474747"/><rect x="885.4" y="4" width="1.5" height="1.5" fill="#474747"/><rect x="889.2" y="0" width="1.5" height="1.5" fill="#474747"/><rect x="889.2" y="4" width="1.5" height="1.5" fill="#474747"/><rect x="893.0" y="0" width="1.5" height="1.5" fill="#474747"/><rect x="893.0" y="4" width="1.5" height="1.5" fill="#474747"/><rect x="896.8" y="0" width="1.5" height="1.5" fill="#474747"/><rect x="896.8" y="4" width="1.5" height="1.5" fill="#474747"/><rect x="900.6" y="0" width="1.5" height="1.5" fill="#474747"/><rect x="900.6" y="4" width="1.5" height="1.5" fill="#474747"/><rect x="904.4" y="0" width="1.5" height="1.5" fill="#474747"/><rect x="904.4" y="4" width="1.5" height="1.5" fill="#474747"/><rect x="908.2" y="0" width="1.5" height="1.5" fill="#474747"/><rect x="908.2" y="4" width="1.5" height="1.5" fill="#474747"/><rect x="912.0" y="0" width="1.5" height="1.5" fill="#474747"/><rect x="912.0" y="4" width="1.5" height="1.5" fill="#474747"/><rect x="915.8" y="0" width="1.5" height="1.5" fill="#474747"/><rect x="915.8" y="4" width="1.5" height="1.5" fill="#474747"/><rect x="919.6" y="0" width="1.5" height="1.5" fill="#474747"/><rect x="919.6" y="4" width="1.5" height="1.5" fill="#474747"/><rect x="923.4" y="0" width="1.5" height="1.5" fill="#474747"/><rect x="923.4" y="4" width="1.5" height="1.5" fill="#474747"/><rect x="927.2" y="0" width="1.5" height="1.5" fill="#474747"/><rect x="927.2" y="4" width="1.5" height="1.5" fill="#474747"/><rect x="931.0" y="0" width="1.5" height="1.5" fill="#474747"/><rect x="931.0" y="4" width="1.5" height="1.5" fill="#474747"/><rect x="934.8" y="0" width="1.5" height="1.5" fill="#474747"/><rect x="934.8" y="4" width="1.5" height="1.5" fill="#474747"/><rect x="938.6" y="0" width="1.5" height="1.5" fill="#474747"/><rect x="938.6" y="4" width="1.5" height="1.5" fill="#474747"/><rect x="942.4" y="0" width="1.5" height="1.5" fill="#474747"/><rect x="942.4" y="4" width="1.5" height="1.5" fill="#474747"/><rect x="946.2" y="0" width="1.5" height="1.5" fill="#474747"/><rect x="946.2" y="4" width="1.5" height="1.5" fill="#474747"/><rect x="950.0" y="0" width="1.5" height="1.5" fill="#474747"/><rect x="950.0" y="4" width="1.5" height="1.5" fill="#474747"/><rect x="953.8" y="0" width="1.5" height="1.5" fill="#474747"/><rect x="953.8" y="4" width="1.5" height="1.5" fill="#474747"/><rect x="957.6" y="0" width="1.5" height="1.5" fill="#474747"/><rect x="957.6" y="4" width="1.5" height="1.5" fill="#474747"/></svg><svg class="a" style="left:46.5px;top:848px;" width="8" height="92" viewBox="0 0 8 92"><rect x="0" y="0.0" width="1.5" height="1.5" fill="#474747"/><rect x="4.3" y="0.0" width="1.5" height="1.5" fill="#474747"/><rect x="0" y="3.8" width="1.5" height="1.5" fill="#474747"/><rect x="4.3" y="3.8" width="1.5" height="1.5" fill="#474747"/><rect x="0" y="7.6" width="1.5" height="1.5" fill="#474747"/><rect x="4.3" y="7.6" width="1.5" height="1.5" fill="#474747"/><rect x="0" y="11.4" width="1.5" height="1.5" fill="#474747"/><rect x="4.3" y="11.4" width="1.5" height="1.5" fill="#474747"/><rect x="0" y="15.2" width="1.5" height="1.5" fill="#474747"/><rect x="4.3" y="15.2" width="1.5" height="1.5" fill="#474747"/><rect x="0" y="19.0" width="1.5" height="1.5" fill="#474747"/><rect x="4.3" y="19.0" width="1.5" height="1.5" fill="#474747"/><rect x="0" y="22.8" width="1.5" height="1.5" fill="#474747"/><rect x="4.3" y="22.8" width="1.5" height="1.5" fill="#474747"/><rect x="0" y="26.6" width="1.5" height="1.5" fill="#474747"/><rect x="4.3" y="26.6" width="1.5" height="1.5" fill="#474747"/><rect x="0" y="30.4" width="1.5" height="1.5" fill="#474747"/><rect x="4.3" y="30.4" width="1.5" height="1.5" fill="#474747"/><rect x="0" y="34.2" width="1.5" height="1.5" fill="#474747"/><rect x="4.3" y="34.2" width="1.5" height="1.5" fill="#474747"/><rect x="0" y="38.0" width="1.5" height="1.5" fill="#474747"/><rect x="4.3" y="38.0" width="1.5" height="1.5" fill="#474747"/><rect x="0" y="41.8" width="1.5" height="1.5" fill="#474747"/><rect x="4.3" y="41.8" width="1.5" height="1.5" fill="#474747"/><rect x="0" y="45.6" width="1.5" height="1.5" fill="#474747"/><rect x="4.3" y="45.6" width="1.5" height="1.5" fill="#474747"/><rect x="0" y="49.4" width="1.5" height="1.5" fill="#474747"/><rect x="4.3" y="49.4" width="1.5" height="1.5" fill="#474747"/><rect x="0" y="53.2" width="1.5" height="1.5" fill="#474747"/><rect x="4.3" y="53.2" width="1.5" height="1.5" fill="#474747"/><rect x="0" y="57.0" width="1.5" height="1.5" fill="#474747"/><rect x="4.3" y="57.0" width="1.5" height="1.5" fill="#474747"/><rect x="0" y="60.8" width="1.5" height="1.5" fill="#474747"/><rect x="4.3" y="60.8" width="1.5" height="1.5" fill="#474747"/><rect x="0" y="64.6" width="1.5" height="1.5" fill="#474747"/><rect x="4.3" y="64.6" width="1.5" height="1.5" fill="#474747"/><rect x="0" y="68.4" width="1.5" height="1.5" fill="#474747"/><rect x="4.3" y="68.4" width="1.5" height="1.5" fill="#474747"/><rect x="0" y="72.2" width="1.5" height="1.5" fill="#474747"/><rect x="4.3" y="72.2" width="1.5" height="1.5" fill="#474747"/><rect x="0" y="76.0" width="1.5" height="1.5" fill="#474747"/><rect x="4.3" y="76.0" width="1.5" height="1.5" fill="#474747"/><rect x="0" y="79.8" width="1.5" height="1.5" fill="#474747"/><rect x="4.3" y="79.8" width="1.5" height="1.5" fill="#474747"/><rect x="0" y="83.6" width="1.5" height="1.5" fill="#474747"/><rect x="4.3" y="83.6" width="1.5" height="1.5" fill="#474747"/><rect x="0" y="87.4" width="1.5" height="1.5" fill="#474747"/><rect x="4.3" y="87.4" width="1.5" height="1.5" fill="#474747"/></svg><div class="a" style="left:55.8px;top:847.5px;width:33.2px;height:33.0px;background:#3a3a3a;border-radius:3px"></div><div class="a" style="left:55.8px;top:847.5px;width:33.2px;height:33.0px;background:#575c9f;border-top-left-radius:3px;border-bottom-left-radius:3px;border-top-right-radius:3px;border-bottom-right-radius:3px;"></div><div class="a" style="left:137px;top:847.5px;width:244px;height:33.0px;background:#3a3a3a;border-radius:3px"></div><div class="a" style="left:171.86px;top:847.5px;width:1px;height:33.0px;background:#313131;"></div><div class="a" style="left:206.71px;top:847.5px;width:1px;height:33.0px;background:#313131;"></div><div class="a" style="left:241.57px;top:847.5px;width:1px;height:33.0px;background:#313131;"></div><div class="a" style="left:276.43px;top:847.5px;width:1px;height:33.0px;background:#313131;"></div><div class="a" style="left:311.29px;top:847.5px;width:1px;height:33.0px;background:#313131;"></div><div class="a" style="left:346.14px;top:847.5px;width:1px;height:33.0px;background:#313131;"></div><div class="a" style="left:395px;top:847.5px;width:103.69999999999999px;height:33.0px;background:#3a3a3a;border-radius:3px"></div><div class="a" style="left:395.0px;top:847.5px;width:34.57px;height:33.0px;background:#575c9f;border-top-left-radius:3px;border-bottom-left-radius:3px;"></div><svg class="a" style="left:422.57px;top:873.5px;" width="6" height="6" viewBox="0 0 6 6"><path d="M6 0 V6 H0 Z" fill="#8a8a8a"/></svg><div class="a" style="left:429.57px;top:847.5px;width:34.57px;height:33.0px;background:#575c9f;"></div><div class="a" style="left:429.57px;top:847.5px;width:1px;height:33.0px;background:#313131;"></div><svg class="a" style="left:457.13px;top:873.5px;" width="6" height="6" viewBox="0 0 6 6"><path d="M6 0 V6 H0 Z" fill="#8a8a8a"/></svg><div class="a" style="left:464.13px;top:847.5px;width:1px;height:33.0px;background:#313131;"></div><div class="a" style="left:619.3px;top:847.5px;width:104.30000000000007px;height:33.0px;background:#3a3a3a;border-radius:3px"></div><svg class="a" style="left:647.07px;top:873.5px;" width="6" height="6" viewBox="0 0 6 6"><path d="M6 0 V6 H0 Z" fill="#8a8a8a"/></svg><div class="a" style="left:654.07px;top:847.5px;width:1px;height:33.0px;background:#313131;"></div><div class="a" style="left:688.83px;top:847.5px;width:1px;height:33.0px;background:#313131;"></div><div class="a" style="left:749px;top:847.5px;width:174px;height:33.0px;background:#3a3a3a;border-radius:3px"></div><div class="a" style="left:783.8px;top:847.5px;width:1px;height:33.0px;background:#313131;"></div><div class="a" style="left:818.6px;top:847.5px;width:1px;height:33.0px;background:#313131;"></div><div class="a" style="left:853.4px;top:847.5px;width:1px;height:33.0px;background:#313131;"></div><div class="a" style="left:888.2px;top:847.5px;width:34.8px;height:33.0px;background:#575c9f;border-top-right-radius:3px;border-bottom-right-radius:3px;"></div><div class="a" style="left:888.2px;top:847.5px;width:1px;height:33.0px;background:#313131;"></div><div class="a" style="left:970.8px;top:847.5px;width:33.200000000000045px;height:33.0px;background:#3a3a3a;border-radius:3px"></div><div class="a" style="left:970.8px;top:847.5px;width:33.2px;height:33.0px;background:#575c9f;border-top-left-radius:3px;border-bottom-left-radius:3px;border-top-right-radius:3px;border-bottom-right-radius:3px;"></div><svg class="a" style="left:55.400000000000006px;top:849.0px;" width="34" height="30" viewBox="0 0 34 30"><path d="M17 5.5 L26.5 15 L17 24.5 L7.5 15 Z" fill="none" stroke="#d0d0d0" stroke-width="2.6"/></svg><svg class="a" style="left:137.42857142857142px;top:849.0px;" width="34" height="30" viewBox="0 0 34 30"><path d="M11.5 7.5 V22.5" stroke="#bdbdbd" stroke-width="2"/><path d="M24.5 8 L15 15 L24.5 22 Z" fill="none" stroke="#bdbdbd" stroke-width="2" stroke-linejoin="miter"/></svg><svg class="a" style="left:172.28571428571428px;top:849.0px;" width="34" height="30" viewBox="0 0 34 30"><path d="M10 9.5 L15.5 15 L10 20.5 L4.5 15 Z" fill="#bdbdbd"/><path d="M27.5 8 L18 15 L27.5 22 Z" fill="none" stroke="#bdbdbd" stroke-width="2" stroke-linejoin="miter"/></svg><svg class="a" style="left:207.14285714285714px;top:849.0px;" width="34" height="30" viewBox="0 0 34 30"><path d="M19.5 8 L10 15 L19.5 22 Z" fill="none" stroke="#bdbdbd" stroke-width="2" stroke-linejoin="miter"/><path d="M23.5 7.5 V22.5" stroke="#bdbdbd" stroke-width="2"/></svg><svg class="a" style="left:242.0px;top:849.0px;" width="34" height="30" viewBox="0 0 34 30"><path d="M11.5 6.5 L24 15 L11.5 23.5 Z" fill="none" stroke="#bdbdbd" stroke-width="2" stroke-linejoin="miter"/></svg><svg class="a" style="left:276.85714285714283px;top:849.0px;" width="34" height="30" viewBox="0 0 34 30"><path d="M10.5 7.5 V22.5" stroke="#bdbdbd" stroke-width="2"/><path d="M14.5 8 L24 15 L14.5 22 Z" fill="none" stroke="#bdbdbd" stroke-width="2" stroke-linejoin="miter"/></svg><svg class="a" style="left:311.71428571428567px;top:849.0px;" width="34" height="30" viewBox="0 0 34 30"><path d="M6.5 8 L16 15 L6.5 22 Z" fill="none" stroke="#bdbdbd" stroke-width="2" stroke-linejoin="miter"/><path d="M24 9.5 L29.5 15 L24 20.5 L18.5 15 Z" fill="#bdbdbd"/></svg><svg class="a" style="left:346.57142857142856px;top:849.0px;" width="34" height="30" viewBox="0 0 34 30"><path d="M9.5 8 L19 15 L9.5 22 Z" fill="none" stroke="#bdbdbd" stroke-width="2" stroke-linejoin="miter"/><path d="M22.5 7.5 V22.5" stroke="#bdbdbd" stroke-width="2"/></svg><svg class="a" style="left:395.2833333333333px;top:849.0px;" width="34" height="30" viewBox="0 0 34 30"><path d="M9 15 V10 H24 M20.5 6.5 L24.5 10 L20.5 13.5 M25 15 V20 H10 M13.5 16.5 L9.5 20 L13.5 23.5" fill="none" stroke="#d4d4d4" stroke-width="2"/></svg><svg class="a" style="left:429.85px;top:849.0px;" width="34" height="30" viewBox="0 0 34 30"><text x="17" y="13.5" font-family="Liberation Sans" font-size="11" fill="#d4d4d4" text-anchor="middle">A</text><rect x="7" y="17.5" width="2.2" height="5" fill="#d4d4d4"/><rect x="11.5" y="17.5" width="2.2" height="5" fill="#d4d4d4"/><rect x="16" y="17.5" width="2.2" height="5" fill="#d4d4d4"/><rect x="20.5" y="17.5" width="7" height="5" fill="#d4d4d4"/></svg><svg class="a" style="left:464.41666666666663px;top:849.0px;" width="34" height="30" viewBox="0 0 34 30"><path d="M7 12 H11 L17 7.5 V22.5 L11 18 H7 Z" fill="none" stroke="#bdbdbd" stroke-width="2" stroke-linejoin="round"/><path d="M20 11.5 A4.5 4.5 0 0 1 20 18.5 M22.5 7.5 A9 9 0 0 1 22.5 22.5" fill="none" stroke="#bdbdbd" stroke-width="2"/></svg><div class="a" style="left:512.4px;top:852.5px;width:93.1px;height:23.3px;background:#1c1c1c;border-radius:4px"></div><div class="t" style="left:549.60px;top:855.80px;font-size:13px;line-height:17px;color:#e0e0e0;font-weight:400;font-family:'Liberation Sans',sans-serif;">0 F</div><svg class="a" style="left:619.6833333333333px;top:849.0px;" width="34" height="30" viewBox="0 0 34 30"><circle cx="17" cy="15" r="9.2" fill="none" stroke="#e06a58" stroke-width="2"/><path d="M17 10.5 L21.5 15 L17 19.5 L12.5 15 Z" fill="#e8e8e8"/></svg><svg class="a" style="left:654.45px;top:849.0px;" width="34" height="30" viewBox="0 0 34 30"><circle cx="17" cy="15" r="9.2" fill="none" stroke="#e06a58" stroke-width="2"/><text x="17" y="19.6" font-family="Liberation Sans" font-size="13" fill="#d8d8d8" text-anchor="middle">A</text></svg><svg class="a" style="left:689.2166666666667px;top:849.0px;" width="34" height="30" viewBox="0 0 34 30"><circle cx="17" cy="15" r="9.5" fill="none" stroke="#bdbdbd" stroke-width="2"/><circle cx="17" cy="15" r="3.4" fill="none" stroke="#bdbdbd" stroke-width="2.6"/><path d="M20.20 15.00 L23.00 15.00" stroke="#bdbdbd" stroke-width="2.4"/><path d="M19.26 17.26 L21.24 19.24" stroke="#bdbdbd" stroke-width="2.4"/><path d="M17.00 18.20 L17.00 21.00" stroke="#bdbdbd" stroke-width="2.4"/><path d="M14.74 17.26 L12.76 19.24" stroke="#bdbdbd" stroke-width="2.4"/><path d="M13.80 15.00 L11.00 15.00" stroke="#bdbdbd" stroke-width="2.4"/><path d="M14.74 12.74 L12.76 10.76" stroke="#bdbdbd" stroke-width="2.4"/><path d="M17.00 11.80 L17.00 9.00" stroke="#bdbdbd" stroke-width="2.4"/><path d="M19.26 12.74 L21.24 10.76" stroke="#bdbdbd" stroke-width="2.4"/></svg><svg class="a" style="left:749.4px;top:849.0px;" width="34" height="30" viewBox="0 0 34 30"><path d="M17 11 L21 15 L17 19 L13 15 Z" fill="#bdbdbd"/><path d="M13.5 8.5 L17 5 L20.5 8.5 M13.5 21.5 L17 25 L20.5 21.5 M10.5 11.5 L7 15 L10.5 18.5 M23.5 11.5 L27 15 L23.5 18.5" fill="none" stroke="#bdbdbd" stroke-width="1.8"/></svg><svg class="a" style="left:784.2px;top:849.0px;" width="34" height="30" viewBox="0 0 34 30"><path d="M17 10.5 L21.5 15 L17 19.5 L12.5 15 Z" fill="#bdbdbd"/><path d="M9.5 20 A9 9 0 0 1 14 7 M24.5 10 A9 9 0 0 1 20 23" fill="none" stroke="#bdbdbd" stroke-width="2"/><path d="M12 24 L9.5 20 L6 23 M22 6 L24.5 10 L28 7" fill="none" stroke="#bdbdbd" stroke-width="1.8"/></svg><svg class="a" style="left:819.0px;top:849.0px;" width="34" height="30" viewBox="0 0 34 30"><path d="M12 12 V6.5 H26.5 V21 H21" fill="none" stroke="#bdbdbd" stroke-width="2"/><path d="M13.5 14.5 L19 20 L13.5 25.5 L8 20 Z" fill="#bdbdbd"/></svg><svg class="a" style="left:853.8px;top:849.0px;" width="34" height="30" viewBox="0 0 34 30"><rect x="7" y="7" width="20" height="7" rx="3.5" fill="#bdbdbd"/><rect x="7" y="16" width="20" height="7" rx="3.5" fill="#bdbdbd"/><circle cx="10.5" cy="10.5" r="2" fill="#383838"/><circle cx="23.5" cy="19.5" r="2" fill="#383838"/></svg><svg class="a" style="left:888.6px;top:849.0px;" width="34" height="30" viewBox="0 0 34 30"><circle cx="12" cy="20" r="3.6" fill="#d0d0d0"/><path d="M15 8 A6 6 0 0 1 22 14" fill="none" stroke="#d0d0d0" stroke-width="2.2"/><circle cx="22" cy="19" r="2.5" fill="#d0d0d0"/><path d="M8 6 L26 24" stroke="#d0d0d0" stroke-width="2"/></svg><svg class="a" style="left:970.4px;top:849.0px;" width="34" height="30" viewBox="0 0 34 30"><path d="M9 6 V24 H27" fill="none" stroke="#d0d0d0" stroke-width="2"/><path d="M6 9 L9 6 L12 9 M24 21 L27 24 L24 27" fill="none" stroke="#d0d0d0" stroke-width="1.8"/><path d="M10 23 L25 8 M19.5 8 H25 V13.5" fill="none" stroke="#d0d0d0" stroke-width="2"/></svg><div class="a" style="left:58px;top:904px;width:950px;height:1px;background:#3a3a3a;"></div><svg class="a" style="left:58px;top:904px;" width="950" height="10" viewBox="0 0 950 10"><rect x="4.50" y="3" width="1.4" height="4" fill="#8a8a8a"/><rect x="15.50" y="3" width="1.4" height="4" fill="#8a8a8a"/><rect x="25.50" y="3" width="1.4" height="4" fill="#8a8a8a"/><rect x="35.50" y="3" width="1.4" height="4" fill="#8a8a8a"/><rect x="45.50" y="3" width="1.4" height="4" fill="#8a8a8a"/><rect x="55.50" y="3" width="1.4" height="4" fill="#8a8a8a"/><rect x="66.50" y="3" width="1.4" height="4" fill="#8a8a8a"/><rect x="76.50" y="3" width="1.4" height="4" fill="#8a8a8a"/><rect x="86.50" y="3" width="1.4" height="4" fill="#8a8a8a"/><rect x="96.50" y="3" width="1.4" height="4" fill="#8a8a8a"/><rect x="106.50" y="3" width="1.4" height="4" fill="#8a8a8a"/><rect x="117.50" y="3" width="1.4" height="4" fill="#8a8a8a"/><rect x="127.50" y="3" width="1.4" height="4" fill="#8a8a8a"/><rect x="137.50" y="3" width="1.4" height="4" fill="#8a8a8a"/><rect x="147.50" y="3" width="1.4" height="4" fill="#8a8a8a"/><rect x="158.50" y="3" width="1.4" height="4" fill="#8a8a8a"/><rect x="168.50" y="3" width="1.4" height="4" fill="#8a8a8a"/><rect x="178.50" y="3" width="1.4" height="4" fill="#8a8a8a"/><rect x="188.50" y="3" width="1.4" height="4" fill="#8a8a8a"/><rect x="198.50" y="3" width="1.4" height="4" fill="#8a8a8a"/><rect x="209.50" y="3" width="1.4" height="4" fill="#8a8a8a"/><rect x="219.50" y="3" width="1.4" height="4" fill="#8a8a8a"/><rect x="229.50" y="3" width="1.4" height="4" fill="#8a8a8a"/><rect x="239.50" y="3" width="1.4" height="4" fill="#8a8a8a"/><rect x="249.50" y="3" width="1.4" height="4" fill="#8a8a8a"/><rect x="260.50" y="3" width="1.4" height="4" fill="#8a8a8a"/><rect x="270.50" y="3" width="1.4" height="4" fill="#8a8a8a"/><rect x="280.50" y="3" width="1.4" height="4" fill="#8a8a8a"/><rect x="290.50" y="3" width="1.4" height="4" fill="#8a8a8a"/><rect x="300.50" y="3" width="1.4" height="4" fill="#8a8a8a"/><rect x="311.50" y="3" width="1.4" height="4" fill="#8a8a8a"/><rect x="321.50" y="3" width="1.4" height="4" fill="#8a8a8a"/><rect x="331.50" y="3" width="1.4" height="4" fill="#8a8a8a"/><rect x="341.50" y="3" width="1.4" height="4" fill="#8a8a8a"/><rect x="352.50" y="3" width="1.4" height="4" fill="#8a8a8a"/><rect x="362.50" y="3" width="1.4" height="4" fill="#8a8a8a"/><rect x="372.50" y="3" width="1.4" height="4" fill="#8a8a8a"/><rect x="382.50" y="3" width="1.4" height="4" fill="#8a8a8a"/><rect x="392.50" y="3" width="1.4" height="4" fill="#8a8a8a"/><rect x="403.50" y="3" width="1.4" height="4" fill="#8a8a8a"/><rect x="413.50" y="3" width="1.4" height="4" fill="#8a8a8a"/><rect x="423.50" y="3" width="1.4" height="4" fill="#8a8a8a"/><rect x="433.50" y="3" width="1.4" height="4" fill="#8a8a8a"/><rect x="443.50" y="3" width="1.4" height="4" fill="#8a8a8a"/><rect x="454.50" y="3" width="1.4" height="4" fill="#8a8a8a"/><rect x="464.50" y="3" width="1.4" height="4" fill="#8a8a8a"/><rect x="474.50" y="3" width="1.4" height="4" fill="#8a8a8a"/><rect x="484.50" y="3" width="1.4" height="4" fill="#8a8a8a"/><rect x="494.50" y="3" width="1.4" height="4" fill="#8a8a8a"/><rect x="505.50" y="3" width="1.4" height="4" fill="#8a8a8a"/><rect x="515.50" y="3" width="1.4" height="4" fill="#8a8a8a"/><rect x="525.50" y="3" width="1.4" height="4" fill="#8a8a8a"/><rect x="535.50" y="3" width="1.4" height="4" fill="#8a8a8a"/><rect x="546.50" y="3" width="1.4" height="4" fill="#8a8a8a"/><rect x="556.50" y="3" width="1.4" height="4" fill="#8a8a8a"/><rect x="566.50" y="3" width="1.4" height="4" fill="#8a8a8a"/><rect x="576.50" y="3" width="1.4" height="4" fill="#8a8a8a"/><rect x="586.50" y="3" width="1.4" height="4" fill="#8a8a8a"/><rect x="597.50" y="3" width="1.4" height="4" fill="#8a8a8a"/><rect x="607.50" y="3" width="1.4" height="4" fill="#8a8a8a"/><rect x="617.50" y="3" width="1.4" height="4" fill="#8a8a8a"/><rect x="627.50" y="3" width="1.4" height="4" fill="#8a8a8a"/><rect x="637.50" y="3" width="1.4" height="4" fill="#8a8a8a"/><rect x="648.50" y="3" width="1.4" height="4" fill="#8a8a8a"/><rect x="658.50" y="3" width="1.4" height="4" fill="#8a8a8a"/><rect x="668.50" y="3" width="1.4" height="4" fill="#8a8a8a"/><rect x="678.50" y="3" width="1.4" height="4" fill="#8a8a8a"/><rect x="688.50" y="3" width="1.4" height="4" fill="#8a8a8a"/><rect x="699.50" y="3" width="1.4" height="4" fill="#8a8a8a"/><rect x="709.50" y="3" width="1.4" height="4" fill="#8a8a8a"/><rect x="719.50" y="3" width="1.4" height="4" fill="#8a8a8a"/><rect x="729.50" y="3" width="1.4" height="4" fill="#8a8a8a"/><rect x="740.50" y="3" width="1.4" height="4" fill="#8a8a8a"/><rect x="750.50" y="3" width="1.4" height="4" fill="#8a8a8a"/><rect x="760.50" y="3" width="1.4" height="4" fill="#8a8a8a"/><rect x="770.50" y="3" width="1.4" height="4" fill="#8a8a8a"/><rect x="780.50" y="3" width="1.4" height="4" fill="#8a8a8a"/><rect x="791.50" y="3" width="1.4" height="4" fill="#8a8a8a"/><rect x="801.50" y="3" width="1.4" height="4" fill="#8a8a8a"/><rect x="811.50" y="3" width="1.4" height="4" fill="#8a8a8a"/><rect x="821.50" y="3" width="1.4" height="4" fill="#8a8a8a"/><rect x="831.50" y="3" width="1.4" height="4" fill="#8a8a8a"/><rect x="842.50" y="3" width="1.4" height="4" fill="#8a8a8a"/><rect x="852.50" y="3" width="1.4" height="4" fill="#8a8a8a"/><rect x="862.50" y="3" width="1.4" height="4" fill="#8a8a8a"/><rect x="872.50" y="3" width="1.4" height="4" fill="#8a8a8a"/><rect x="882.50" y="3" width="1.4" height="4" fill="#8a8a8a"/><rect x="893.50" y="3" width="1.4" height="4" fill="#8a8a8a"/><rect x="903.50" y="3" width="1.4" height="4" fill="#8a8a8a"/><rect x="913.50" y="3" width="1.4" height="4" fill="#8a8a8a"/><rect x="923.50" y="3" width="1.4" height="4" fill="#8a8a8a"/><rect x="934.50" y="3" width="1.4" height="4" fill="#8a8a8a"/><rect x="944.50" y="3" width="1.4" height="4" fill="#8a8a8a"/></svg><div class="a" style="left:73.4px;top:896px;width:1.3px;height:15px;background:#b0b0b0;"></div><div class="a" style="left:379.4px;top:885px;width:1.3px;height:26px;background:#b0b0b0;"></div><div class="a" style="left:685.4px;top:885px;width:1.3px;height:26px;background:#b0b0b0;"></div><div class="a" style="left:992.4px;top:885px;width:1.3px;height:26px;background:#b0b0b0;"></div><div class="a" style="left:67px;top:883.7px;width:12px;height:20px;background:#6f74bd;"></div><div class="t" style="left:80.70px;top:883.80px;font-size:14px;line-height:18px;color:#7b80c8;font-weight:400;font-family:'Liberation Sans',sans-serif;transform:scaleX(0.9234);">0</div><div class="t" style="left:120.35px;top:883.80px;font-size:14px;line-height:18px;color:#a8a8a8;font-weight:400;font-family:'Liberation Sans',sans-serif;transform:scaleX(0.9234);">5</div><div class="t" style="left:167.80px;top:883.80px;font-size:14px;line-height:18px;color:#a8a8a8;font-weight:400;font-family:'Liberation Sans',sans-serif;transform:scaleX(0.9244);">10</div><div class="t" style="left:218.85px;top:883.80px;font-size:14px;line-height:18px;color:#a8a8a8;font-weight:400;font-family:'Liberation Sans',sans-serif;transform:scaleX(0.9244);">15</div><div class="t" style="left:269.90px;top:883.80px;font-size:14px;line-height:18px;color:#a8a8a8;font-weight:400;font-family:'Liberation Sans',sans-serif;transform:scaleX(0.9244);">20</div><div class="t" style="left:320.95px;top:883.80px;font-size:14px;line-height:18px;color:#a8a8a8;font-weight:400;font-family:'Liberation Sans',sans-serif;transform:scaleX(0.9244);">25</div><div class="t" style="left:372.00px;top:883.80px;font-size:14px;line-height:18px;color:#a8a8a8;font-weight:400;font-family:'Liberation Sans',sans-serif;transform:scaleX(0.9244);">30</div><div class="t" style="left:423.05px;top:883.80px;font-size:14px;line-height:18px;color:#a8a8a8;font-weight:400;font-family:'Liberation Sans',sans-serif;transform:scaleX(0.9244);">35</div><div class="t" style="left:474.10px;top:883.80px;font-size:14px;line-height:18px;color:#a8a8a8;font-weight:400;font-family:'Liberation Sans',sans-serif;transform:scaleX(0.9244);">40</div><div class="t" style="left:525.15px;top:883.80px;font-size:14px;line-height:18px;color:#a8a8a8;font-weight:400;font-family:'Liberation Sans',sans-serif;transform:scaleX(0.9244);">45</div><div class="t" style="left:576.20px;top:883.80px;font-size:14px;line-height:18px;color:#a8a8a8;font-weight:400;font-family:'Liberation Sans',sans-serif;transform:scaleX(0.9244);">50</div><div class="t" style="left:627.25px;top:883.80px;font-size:14px;line-height:18px;color:#a8a8a8;font-weight:400;font-family:'Liberation Sans',sans-serif;transform:scaleX(0.9244);">55</div><div class="t" style="left:678.30px;top:883.80px;font-size:14px;line-height:18px;color:#a8a8a8;font-weight:400;font-family:'Liberation Sans',sans-serif;transform:scaleX(0.9244);">60</div><div class="t" style="left:729.35px;top:883.80px;font-size:14px;line-height:18px;color:#a8a8a8;font-weight:400;font-family:'Liberation Sans',sans-serif;transform:scaleX(0.9244);">65</div><div class="t" style="left:780.40px;top:883.80px;font-size:14px;line-height:18px;color:#a8a8a8;font-weight:400;font-family:'Liberation Sans',sans-serif;transform:scaleX(0.9244);">70</div><div class="t" style="left:831.45px;top:883.80px;font-size:14px;line-height:18px;color:#a8a8a8;font-weight:400;font-family:'Liberation Sans',sans-serif;transform:scaleX(0.9244);">75</div><div class="t" style="left:882.50px;top:883.80px;font-size:14px;line-height:18px;color:#a8a8a8;font-weight:400;font-family:'Liberation Sans',sans-serif;transform:scaleX(0.9244);">80</div><div class="t" style="left:933.55px;top:883.80px;font-size:14px;line-height:18px;color:#a8a8a8;font-weight:400;font-family:'Liberation Sans',sans-serif;transform:scaleX(0.9244);">85</div><div class="t" style="left:984.60px;top:883.80px;font-size:14px;line-height:18px;color:#a8a8a8;font-weight:400;font-family:'Liberation Sans',sans-serif;transform:scaleX(0.9244);">90</div><div class="a" style="left:56.6px;top:915.3px;width:92.4px;height:22px;background:#1c1c1c;border-radius:4px"></div><div class="t" style="left:92.60px;top:917.30px;font-size:13px;line-height:17px;color:#dcdcdc;font-weight:400;font-family:'Liberation Sans',sans-serif;">0 F</div><div class="a" style="left:159.4px;top:915.3px;width:749px;height:21px;background:#3a3a3a;border-radius:4px 0 0 4px"></div><svg class="a" style="left:165px;top:918px;" width="8" height="16" viewBox="0 0 8 16"><path d="M1 0 V16 M3.5 0 V16 M6 0 V16" stroke="#2c2c2c" stroke-width="1"/></svg><div class="t" style="left:178.00px;top:916.80px;font-size:13px;line-height:17px;color:#dcdcdc;font-weight:400;font-family:'Liberation Sans',sans-serif;">0 F</div><div class="t" style="left:860.48px;top:916.80px;font-size:13px;line-height:17px;color:#dcdcdc;font-weight:400;font-family:'Liberation Sans',sans-serif;">90 F</div><svg class="a" style="left:896px;top:918px;" width="8" height="16" viewBox="0 0 8 16"><path d="M1 0 V16 M3.5 0 V16 M6 0 V16" stroke="#2c2c2c" stroke-width="1"/></svg><div class="a" style="left:916.4px;top:915.3px;width:93.1px;height:22px;background:#1c1c1c;border-radius:4px"></div><div class="t" style="left:948.99px;top:917.50px;font-size:13px;line-height:17px;color:#dcdcdc;font-weight:400;font-family:'Liberation Sans',sans-serif;">90 F</div></body></html>
